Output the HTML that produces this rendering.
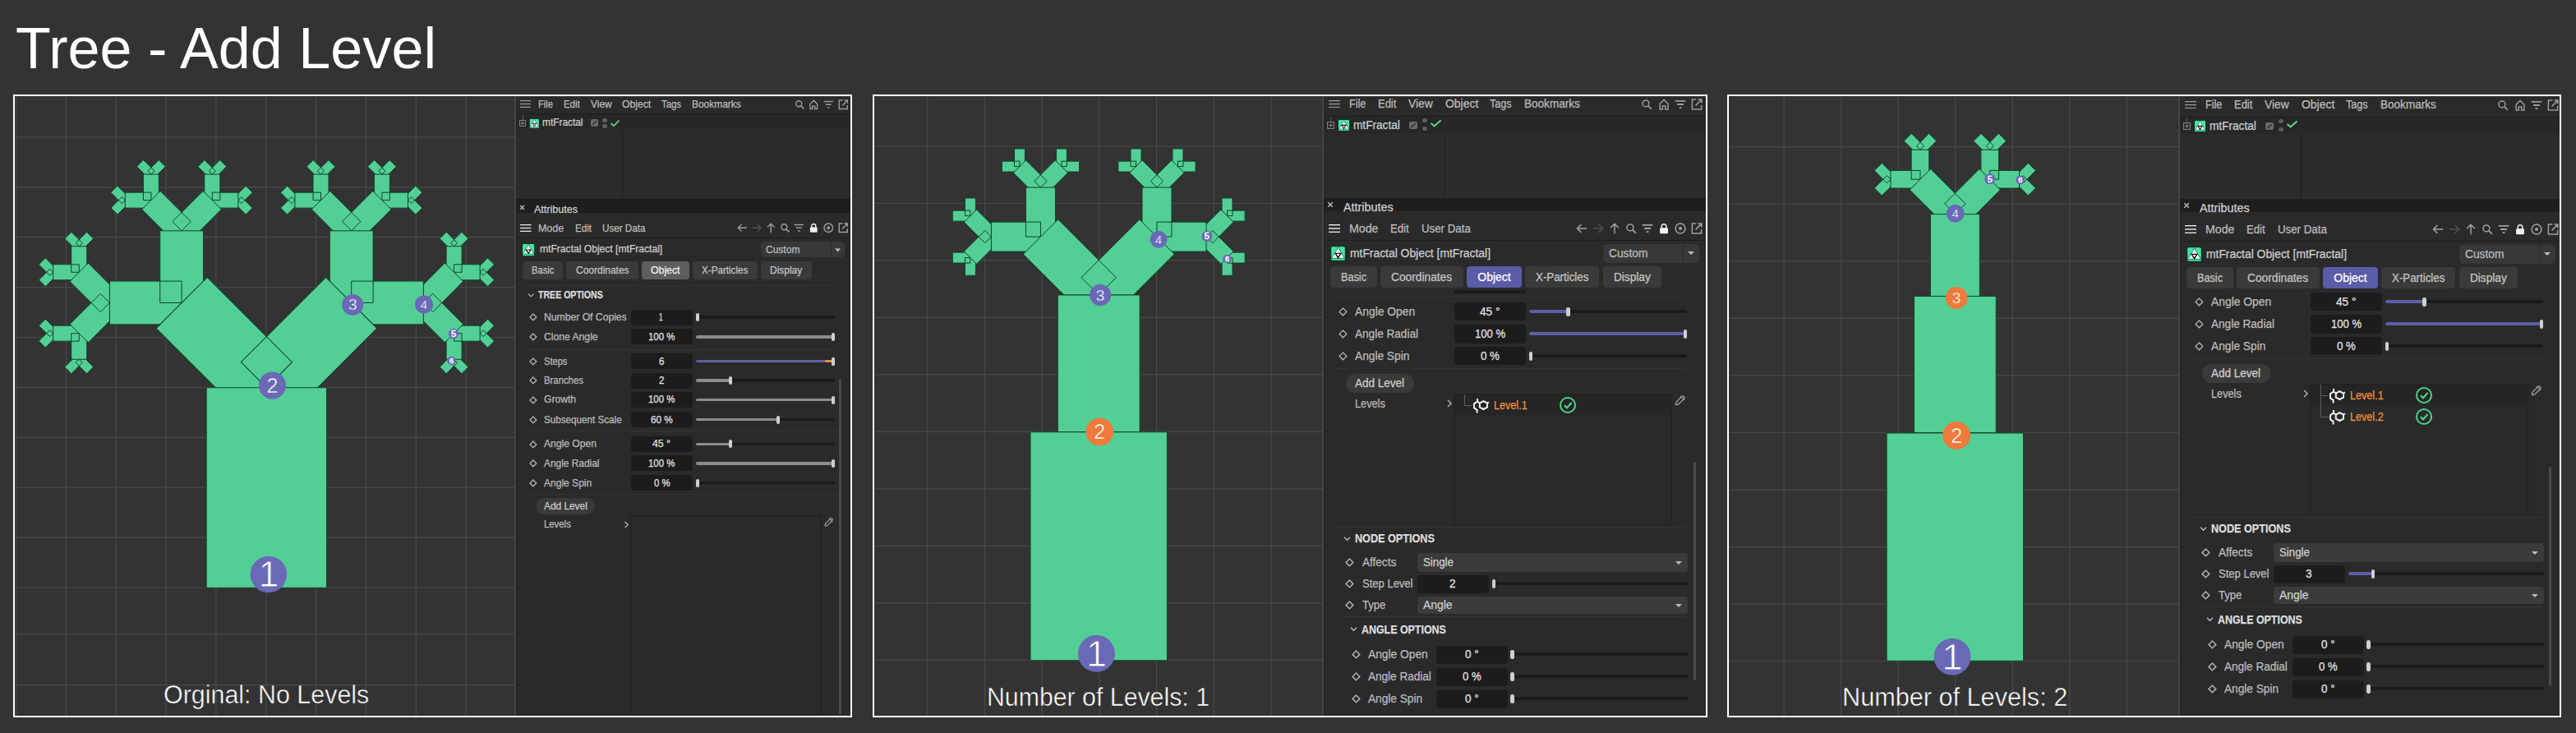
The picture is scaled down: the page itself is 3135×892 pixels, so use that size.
<!DOCTYPE html><html><head><meta charset="utf-8"><style>
html,body{margin:0;padding:0;}
body{width:3135px;height:892px;background:#333333;position:relative;overflow:hidden;font-family:"Liberation Sans",sans-serif;}
.t{position:absolute;white-space:nowrap;transform-origin:0 0;-webkit-text-stroke:0.25px currentColor;}
.r{position:absolute;}
svg{position:absolute;left:0;top:0;}
</style></head><body>
<div class="t" style="left:19.00px;top:23.38px;font-size:71px;line-height:71px;color:#ffffff;transform:scaleX(0.9878);-webkit-text-stroke:0;">Tree - Add Level</div>
<svg width="608.00" height="753.00" viewBox="18.50 117.50 608.00 753.00" style="left:18.50px;top:117.50px"><rect x="18.5" y="117.5" width="608.0" height="753.0" fill="#333333"/><path d="M19.00 117.5V870.5M79.85 117.5V870.5M140.70 117.5V870.5M201.55 117.5V870.5M262.40 117.5V870.5M323.25 117.5V870.5M384.10 117.5V870.5M444.95 117.5V870.5M505.80 117.5V870.5M566.65 117.5V870.5M18.5 166.40H626.5M18.5 227.30H626.5M18.5 288.20H626.5M18.5 349.10H626.5M18.5 410.00H626.5M18.5 470.90H626.5M18.5 531.80H626.5M18.5 592.70H626.5M18.5 653.60H626.5M18.5 714.50H626.5M18.5 771.10H626.5M18.5 833.10H626.5" stroke="#4a4a4a" stroke-width="1.2" fill="none"/><path d="M99.77 432.71 L91.71 440.77 L105.10 454.16 L113.16 446.10ZM99.77 440.77 L91.71 432.71 L78.32 446.10 L86.38 454.16ZM68.21 409.21 L60.16 401.16 L46.77 414.54 L54.82 422.60ZM60.16 409.21 L68.21 401.16 L54.82 387.77 L46.77 395.82ZM68.21 334.83 L60.16 326.77 L46.77 340.16 L54.82 348.22ZM60.16 334.83 L68.21 326.77 L54.82 313.38 L46.77 321.44ZM91.71 303.27 L99.77 295.22 L86.38 281.83 L78.32 289.88ZM91.71 295.22 L99.77 303.27 L113.16 289.88 L105.10 281.83ZM155.87 247.17 L147.82 239.11 L134.43 252.50 L142.48 260.56ZM147.82 247.17 L155.87 239.11 L142.48 225.72 L134.43 233.78ZM179.37 215.61 L187.43 207.56 L174.04 194.17 L165.98 202.22ZM179.37 207.56 L187.43 215.61 L200.82 202.22 L192.76 194.17ZM253.76 215.61 L261.81 207.56 L248.42 194.17 L240.37 202.22ZM253.76 207.56 L261.81 215.61 L275.20 202.22 L267.14 194.17ZM285.31 239.11 L293.37 247.17 L306.76 233.78 L298.70 225.72ZM293.37 239.11 L285.31 247.17 L298.70 260.56 L306.76 252.50ZM362.49 247.17 L354.43 239.11 L341.04 252.50 L349.10 260.56ZM354.43 247.17 L362.49 239.11 L349.10 225.72 L341.04 233.78ZM385.99 215.61 L394.04 207.56 L380.66 194.17 L372.60 202.22ZM385.99 207.56 L394.04 215.61 L407.43 202.22 L399.38 194.17ZM460.37 215.61 L468.43 207.56 L455.04 194.17 L446.98 202.22ZM460.37 207.56 L468.43 215.61 L481.82 202.22 L473.76 194.17ZM491.93 239.11 L499.98 247.17 L513.37 233.78 L505.32 225.72ZM499.98 239.11 L491.93 247.17 L505.32 260.56 L513.37 252.50ZM548.03 303.27 L556.09 295.22 L542.70 281.83 L534.64 289.88ZM548.03 295.22 L556.09 303.27 L569.48 289.88 L561.42 281.83ZM579.59 326.77 L587.64 334.83 L601.03 321.44 L592.98 313.38ZM587.64 326.77 L579.59 334.83 L592.98 348.22 L601.03 340.16ZM579.59 401.16 L587.64 409.21 L601.03 395.82 L592.98 387.77ZM587.64 401.16 L579.59 409.21 L592.98 422.60 L601.03 414.54ZM556.09 432.71 L548.03 440.77 L561.42 454.16 L569.48 446.10ZM556.09 440.77 L548.03 432.71 L534.64 446.10 L542.70 454.16Z" fill="#53cf96"/><path d="M99.77 432.71 L91.71 440.77 L105.10 454.16 L113.16 446.10ZM99.77 440.77 L91.71 432.71 L78.32 446.10 L86.38 454.16ZM68.21 409.21 L60.16 401.16 L46.77 414.54 L54.82 422.60ZM60.16 409.21 L68.21 401.16 L54.82 387.77 L46.77 395.82ZM68.21 334.83 L60.16 326.77 L46.77 340.16 L54.82 348.22ZM60.16 334.83 L68.21 326.77 L54.82 313.38 L46.77 321.44ZM91.71 303.27 L99.77 295.22 L86.38 281.83 L78.32 289.88ZM91.71 295.22 L99.77 303.27 L113.16 289.88 L105.10 281.83ZM155.87 247.17 L147.82 239.11 L134.43 252.50 L142.48 260.56ZM147.82 247.17 L155.87 239.11 L142.48 225.72 L134.43 233.78ZM179.37 215.61 L187.43 207.56 L174.04 194.17 L165.98 202.22ZM179.37 207.56 L187.43 215.61 L200.82 202.22 L192.76 194.17ZM253.76 215.61 L261.81 207.56 L248.42 194.17 L240.37 202.22ZM253.76 207.56 L261.81 215.61 L275.20 202.22 L267.14 194.17ZM285.31 239.11 L293.37 247.17 L306.76 233.78 L298.70 225.72ZM293.37 239.11 L285.31 247.17 L298.70 260.56 L306.76 252.50ZM362.49 247.17 L354.43 239.11 L341.04 252.50 L349.10 260.56ZM354.43 247.17 L362.49 239.11 L349.10 225.72 L341.04 233.78ZM385.99 215.61 L394.04 207.56 L380.66 194.17 L372.60 202.22ZM385.99 207.56 L394.04 215.61 L407.43 202.22 L399.38 194.17ZM460.37 215.61 L468.43 207.56 L455.04 194.17 L446.98 202.22ZM460.37 207.56 L468.43 215.61 L481.82 202.22 L473.76 194.17ZM491.93 239.11 L499.98 247.17 L513.37 233.78 L505.32 225.72ZM499.98 239.11 L491.93 247.17 L505.32 260.56 L513.37 252.50ZM548.03 303.27 L556.09 295.22 L542.70 281.83 L534.64 289.88ZM548.03 295.22 L556.09 303.27 L569.48 289.88 L561.42 281.83ZM579.59 326.77 L587.64 334.83 L601.03 321.44 L592.98 313.38ZM587.64 326.77 L579.59 334.83 L592.98 348.22 L601.03 340.16ZM579.59 401.16 L587.64 409.21 L601.03 395.82 L592.98 387.77ZM587.64 401.16 L579.59 409.21 L592.98 422.60 L601.03 414.54ZM556.09 432.71 L548.03 440.77 L561.42 454.16 L569.48 446.10ZM556.09 440.77 L548.03 432.71 L534.64 446.10 L542.70 454.16Z" fill="none" stroke="#0f4429" stroke-width="1.0" stroke-linejoin="miter"/><path d="M105.23 405.18 L86.25 405.18 L86.25 436.74 L105.23 436.74ZM95.74 414.68 L95.74 395.69 L64.18 395.69 L64.18 414.68ZM95.74 340.29 L95.74 321.31 L64.18 321.31 L64.18 340.29ZM86.25 330.80 L105.23 330.80 L105.23 299.24 L86.25 299.24ZM183.40 252.63 L183.40 233.65 L151.84 233.65 L151.84 252.63ZM173.91 243.14 L192.89 243.14 L192.89 211.58 L173.91 211.58ZM248.29 243.14 L267.28 243.14 L267.28 211.58 L248.29 211.58ZM257.78 233.65 L257.78 252.63 L289.34 252.63 L289.34 233.65ZM390.02 252.63 L390.02 233.65 L358.46 233.65 L358.46 252.63ZM380.52 243.14 L399.51 243.14 L399.51 211.58 L380.52 211.58ZM454.91 243.14 L473.89 243.14 L473.89 211.58 L454.91 211.58ZM464.40 233.65 L464.40 252.63 L495.96 252.63 L495.96 233.65ZM542.57 330.80 L561.55 330.80 L561.55 299.24 L542.57 299.24ZM552.06 321.31 L552.06 340.29 L583.62 340.29 L583.62 321.31ZM552.06 395.69 L552.06 414.68 L583.62 414.68 L583.62 395.69ZM561.55 405.18 L542.57 405.18 L542.57 436.74 L561.55 436.74Z" fill="#53cf96"/><path d="M105.23 405.18 L86.25 405.18 L86.25 436.74 L105.23 436.74ZM95.74 414.68 L95.74 395.69 L64.18 395.69 L64.18 414.68ZM95.74 340.29 L95.74 321.31 L64.18 321.31 L64.18 340.29ZM86.25 330.80 L105.23 330.80 L105.23 299.24 L86.25 299.24ZM183.40 252.63 L183.40 233.65 L151.84 233.65 L151.84 252.63ZM173.91 243.14 L192.89 243.14 L192.89 211.58 L173.91 211.58ZM248.29 243.14 L267.28 243.14 L267.28 211.58 L248.29 211.58ZM257.78 233.65 L257.78 252.63 L289.34 252.63 L289.34 233.65ZM390.02 252.63 L390.02 233.65 L358.46 233.65 L358.46 252.63ZM380.52 243.14 L399.51 243.14 L399.51 211.58 L380.52 211.58ZM454.91 243.14 L473.89 243.14 L473.89 211.58 L454.91 211.58ZM464.40 233.65 L464.40 252.63 L495.96 252.63 L495.96 233.65ZM542.57 330.80 L561.55 330.80 L561.55 299.24 L542.57 299.24ZM552.06 321.31 L552.06 340.29 L583.62 340.29 L583.62 321.31ZM552.06 395.69 L552.06 414.68 L583.62 414.68 L583.62 395.69ZM561.55 405.18 L542.57 405.18 L542.57 436.74 L561.55 436.74Z" fill="none" stroke="#0f4429" stroke-width="1.0" stroke-linejoin="miter"/><path d="M144.12 379.18 L121.74 356.80 L84.55 393.99 L106.93 416.37ZM121.74 379.18 L144.12 356.80 L106.93 319.61 L84.55 341.99ZM209.40 291.52 L231.78 269.14 L194.59 231.95 L172.21 254.33ZM209.40 269.14 L231.78 291.52 L268.97 254.33 L246.59 231.95ZM416.02 291.52 L438.40 269.14 L401.21 231.95 L378.83 254.33ZM416.02 269.14 L438.40 291.52 L475.59 254.33 L453.21 231.95ZM503.68 356.80 L526.06 379.18 L563.25 341.99 L540.87 319.61ZM526.06 356.80 L503.68 379.18 L540.87 416.37 L563.25 393.99Z" fill="#53cf96"/><path d="M144.12 379.18 L121.74 356.80 L84.55 393.99 L106.93 416.37ZM121.74 379.18 L144.12 356.80 L106.93 319.61 L84.55 341.99ZM209.40 291.52 L231.78 269.14 L194.59 231.95 L172.21 254.33ZM209.40 269.14 L231.78 291.52 L268.97 254.33 L246.59 231.95ZM416.02 291.52 L438.40 269.14 L401.21 231.95 L378.83 254.33ZM416.02 269.14 L438.40 291.52 L475.59 254.33 L453.21 231.95ZM503.68 356.80 L526.06 379.18 L563.25 341.99 L540.87 319.61ZM526.06 356.80 L503.68 379.18 L540.87 416.37 L563.25 393.99Z" fill="none" stroke="#0f4429" stroke-width="1.0" stroke-linejoin="miter"/><path d="M220.59 394.36 L220.59 341.62 L132.93 341.62 L132.93 394.36ZM194.22 367.99 L246.96 367.99 L246.96 280.33 L194.22 280.33ZM400.84 367.99 L453.58 367.99 L453.58 280.33 L400.84 280.33ZM427.21 341.62 L427.21 394.36 L514.87 394.36 L514.87 341.62Z" fill="#53cf96"/><path d="M220.59 394.36 L220.59 341.62 L132.93 341.62 L132.93 394.36ZM194.22 367.99 L246.96 367.99 L246.96 280.33 L194.22 280.33ZM400.84 367.99 L453.58 367.99 L453.58 280.33 L400.84 280.33ZM427.21 341.62 L427.21 394.36 L514.87 394.36 L514.87 341.62Z" fill="none" stroke="#0f4429" stroke-width="1.0" stroke-linejoin="miter"/><path d="M292.82 502.38 L354.98 440.22 L251.67 336.91 L189.51 399.07ZM292.82 440.22 L354.98 502.38 L458.29 399.07 L396.13 336.91Z" fill="#53cf96"/><path d="M292.82 502.38 L354.98 440.22 L251.67 336.91 L189.51 399.07ZM292.82 440.22 L354.98 502.38 L458.29 399.07 L396.13 336.91Z" fill="none" stroke="#0f4429" stroke-width="1.1" stroke-linejoin="miter"/><path d="M250.65 714.80 L397.15 714.80 L397.15 471.30 L250.65 471.30Z" fill="#53cf96"/><path d="M250.65 714.80 L397.15 714.80 L397.15 471.30 L250.65 471.30Z" fill="none" stroke="#0f4429" stroke-width="1.1" stroke-linejoin="miter"/><circle cx="326.4" cy="698.5" r="22.3" fill="#6a69b6"/><text x="326.4" y="713.68" font-size="44" fill="#ffffff" stroke="#6a69b6" stroke-width="0.79" text-anchor="middle" font-family="Liberation Sans">1</text><circle cx="331" cy="468.6" r="16.6" fill="#6a69b6"/><text x="331" y="477.23" font-size="25" fill="#ffffff" stroke="#6a69b6" stroke-width="0.45" text-anchor="middle" font-family="Liberation Sans">2</text><circle cx="428.7" cy="370.4" r="13" fill="#6a69b6"/><text x="428.7" y="376.95" font-size="19" fill="#ffffff" stroke="#6a69b6" stroke-width="0.34" text-anchor="middle" font-family="Liberation Sans">3</text><circle cx="515.5" cy="370" r="11" fill="#6a69b6"/><text x="515.5" y="375.18" font-size="15" fill="#ffffff" stroke="#6a69b6" stroke-width="0.27" text-anchor="middle" font-family="Liberation Sans">4</text><circle cx="551.5" cy="405.6" r="6.3" fill="#6a69b6"/><text x="551.5" y="409.40" font-size="11" fill="#ffffff" stroke="#ffffff" stroke-width="0.50" text-anchor="middle" font-family="Liberation Sans">5</text><circle cx="549" cy="438.4" r="5.2" fill="#6a69b6"/><text x="549" y="441.50" font-size="9" fill="#ffffff" stroke="#ffffff" stroke-width="0.50" text-anchor="middle" font-family="Liberation Sans">6</text></svg>
<svg width="545.00" height="753.00" viewBox="1064.50 117.50 545.00 753.00" style="left:1064.50px;top:117.50px"><rect x="1064.5" y="117.5" width="545.0" height="753.0" fill="#333333"/><path d="M1128.30 117.5V870.5M1198.00 117.5V870.5M1267.70 117.5V870.5M1337.40 117.5V870.5M1407.10 117.5V870.5M1476.80 117.5V870.5M1546.50 117.5V870.5M1064.5 177.50H1609.5M1064.5 246.98H1609.5M1064.5 316.46H1609.5M1064.5 385.94H1609.5M1064.5 455.42H1609.5M1064.5 524.90H1609.5M1064.5 594.38H1609.5M1064.5 663.86H1609.5M1064.5 733.34H1609.5M1064.5 802.82H1609.5" stroke="#4a4a4a" stroke-width="1.2" fill="none"/><path d="M1186.88 313.11 L1173.94 313.11 L1173.94 334.73 L1186.88 334.73ZM1180.41 319.58 L1180.41 306.64 L1158.79 306.64 L1158.79 319.58ZM1180.41 268.63 L1180.41 255.68 L1158.79 255.68 L1158.79 268.63ZM1173.94 262.16 L1186.88 262.16 L1186.88 240.54 L1173.94 240.54ZM1240.46 208.58 L1240.46 195.64 L1218.84 195.64 L1218.84 208.58ZM1233.98 202.11 L1246.93 202.11 L1246.93 180.49 L1233.98 180.49ZM1284.94 202.11 L1297.88 202.11 L1297.88 180.49 L1284.94 180.49ZM1291.41 195.64 L1291.41 208.58 L1313.03 208.58 L1313.03 195.64ZM1381.99 208.58 L1381.99 195.64 L1360.37 195.64 L1360.37 208.58ZM1375.52 202.11 L1388.46 202.11 L1388.46 180.49 L1375.52 180.49ZM1426.47 202.11 L1439.42 202.11 L1439.42 180.49 L1426.47 180.49ZM1432.94 195.64 L1432.94 208.58 L1454.56 208.58 L1454.56 195.64ZM1486.52 262.16 L1499.46 262.16 L1499.46 240.54 L1486.52 240.54ZM1492.99 255.68 L1492.99 268.63 L1514.61 268.63 L1514.61 255.68ZM1492.99 306.64 L1492.99 319.58 L1514.61 319.58 L1514.61 306.64ZM1499.46 313.11 L1486.52 313.11 L1486.52 334.73 L1499.46 334.73Z" fill="#53cf96"/><path d="M1186.88 313.11 L1173.94 313.11 L1173.94 334.73 L1186.88 334.73ZM1180.41 319.58 L1180.41 306.64 L1158.79 306.64 L1158.79 319.58ZM1180.41 268.63 L1180.41 255.68 L1158.79 255.68 L1158.79 268.63ZM1173.94 262.16 L1186.88 262.16 L1186.88 240.54 L1173.94 240.54ZM1240.46 208.58 L1240.46 195.64 L1218.84 195.64 L1218.84 208.58ZM1233.98 202.11 L1246.93 202.11 L1246.93 180.49 L1233.98 180.49ZM1284.94 202.11 L1297.88 202.11 L1297.88 180.49 L1284.94 180.49ZM1291.41 195.64 L1291.41 208.58 L1313.03 208.58 L1313.03 195.64ZM1381.99 208.58 L1381.99 195.64 L1360.37 195.64 L1360.37 208.58ZM1375.52 202.11 L1388.46 202.11 L1388.46 180.49 L1375.52 180.49ZM1426.47 202.11 L1439.42 202.11 L1439.42 180.49 L1426.47 180.49ZM1432.94 195.64 L1432.94 208.58 L1454.56 208.58 L1454.56 195.64ZM1486.52 262.16 L1499.46 262.16 L1499.46 240.54 L1486.52 240.54ZM1492.99 255.68 L1492.99 268.63 L1514.61 268.63 L1514.61 255.68ZM1492.99 306.64 L1492.99 319.58 L1514.61 319.58 L1514.61 306.64ZM1499.46 313.11 L1486.52 313.11 L1486.52 334.73 L1499.46 334.73Z" fill="none" stroke="#0f4429" stroke-width="1.0" stroke-linejoin="miter"/><path d="M1213.51 295.26 L1198.26 280.00 L1172.78 305.48 L1188.04 320.74ZM1198.26 295.26 L1213.51 280.00 L1188.04 254.53 L1172.78 269.79ZM1258.30 235.21 L1273.56 219.96 L1248.09 194.48 L1232.83 209.74ZM1258.30 219.96 L1273.56 235.21 L1299.04 209.74 L1283.78 194.48ZM1399.84 235.21 L1415.10 219.96 L1389.62 194.48 L1374.36 209.74ZM1399.84 219.96 L1415.10 235.21 L1440.57 209.74 L1425.31 194.48ZM1459.89 280.00 L1475.14 295.26 L1500.62 269.79 L1485.36 254.53ZM1475.14 280.00 L1459.89 295.26 L1485.36 320.74 L1500.62 305.48Z" fill="#53cf96"/><path d="M1213.51 295.26 L1198.26 280.00 L1172.78 305.48 L1188.04 320.74ZM1198.26 295.26 L1213.51 280.00 L1188.04 254.53 L1172.78 269.79ZM1258.30 235.21 L1273.56 219.96 L1248.09 194.48 L1232.83 209.74ZM1258.30 219.96 L1273.56 235.21 L1299.04 209.74 L1283.78 194.48ZM1399.84 235.21 L1415.10 219.96 L1389.62 194.48 L1374.36 209.74ZM1399.84 219.96 L1415.10 235.21 L1440.57 209.74 L1425.31 194.48ZM1459.89 280.00 L1475.14 295.26 L1500.62 269.79 L1485.36 254.53ZM1475.14 280.00 L1459.89 295.26 L1485.36 320.74 L1500.62 305.48Z" fill="none" stroke="#0f4429" stroke-width="1.0" stroke-linejoin="miter"/><path d="M1265.93 305.61 L1265.93 269.65 L1205.88 269.65 L1205.88 305.61ZM1247.95 287.63 L1283.91 287.63 L1283.91 227.58 L1247.95 227.58ZM1389.49 287.63 L1425.45 287.63 L1425.45 227.58 L1389.49 227.58ZM1407.47 269.65 L1407.47 305.61 L1467.52 305.61 L1467.52 269.65Z" fill="#53cf96"/><path d="M1265.93 305.61 L1265.93 269.65 L1205.88 269.65 L1205.88 305.61ZM1247.95 287.63 L1283.91 287.63 L1283.91 227.58 L1247.95 227.58ZM1389.49 287.63 L1425.45 287.63 L1425.45 227.58 L1389.49 227.58ZM1407.47 269.65 L1407.47 305.61 L1467.52 305.61 L1467.52 269.65Z" fill="none" stroke="#0f4429" stroke-width="1.0" stroke-linejoin="miter"/><path d="M1315.51 379.59 L1357.89 337.21 L1287.12 266.44 L1244.74 308.82ZM1315.51 337.21 L1357.89 379.59 L1428.66 308.82 L1386.28 266.44Z" fill="#53cf96"/><path d="M1315.51 379.59 L1357.89 337.21 L1287.12 266.44 L1244.74 308.82ZM1315.51 337.21 L1357.89 379.59 L1428.66 308.82 L1386.28 266.44Z" fill="none" stroke="#0f4429" stroke-width="1.0" stroke-linejoin="miter"/><path d="M1286.75 525.20 L1386.65 525.20 L1386.65 358.40 L1286.75 358.40Z" fill="#53cf96"/><path d="M1286.75 525.20 L1386.65 525.20 L1386.65 358.40 L1286.75 358.40Z" fill="none" stroke="#0f4429" stroke-width="1.1" stroke-linejoin="miter"/><path d="M1253.45 803.20 L1419.95 803.20 L1419.95 525.20 L1253.45 525.20Z" fill="#53cf96"/><path d="M1253.45 803.20 L1419.95 803.20 L1419.95 525.20 L1253.45 525.20Z" fill="none" stroke="#0f4429" stroke-width="1.1" stroke-linejoin="miter"/><circle cx="1333.9" cy="794.8" r="22.5" fill="#6a69b6"/><text x="1333.9" y="810.32" font-size="45" fill="#ffffff" stroke="#6a69b6" stroke-width="0.81" text-anchor="middle" font-family="Liberation Sans">1</text><circle cx="1337.8" cy="525" r="16.9" fill="#ef7a3c"/><text x="1337.8" y="533.62" font-size="25" fill="#ffffff" stroke="#ef7a3c" stroke-width="0.45" text-anchor="middle" font-family="Liberation Sans">2</text><circle cx="1338.6" cy="358.6" r="13.1" fill="#6a69b6"/><text x="1338.6" y="365.16" font-size="19" fill="#ffffff" stroke="#6a69b6" stroke-width="0.34" text-anchor="middle" font-family="Liberation Sans">3</text><circle cx="1409.5" cy="290.9" r="10.4" fill="#6a69b6"/><text x="1409.5" y="296.07" font-size="15" fill="#ffffff" stroke="#6a69b6" stroke-width="0.27" text-anchor="middle" font-family="Liberation Sans">4</text><circle cx="1468.4" cy="287.1" r="6.5" fill="#6a69b6"/><text x="1468.4" y="290.90" font-size="11" fill="#ffffff" stroke="#ffffff" stroke-width="0.50" text-anchor="middle" font-family="Liberation Sans">5</text><circle cx="1493" cy="314.4" r="5.2" fill="#6a69b6"/><text x="1493" y="317.50" font-size="9" fill="#ffffff" stroke="#ffffff" stroke-width="0.50" text-anchor="middle" font-family="Liberation Sans">6</text></svg>
<svg width="546.50" height="753.00" viewBox="2104.50 117.50 546.50 753.00" style="left:2104.50px;top:117.50px"><rect x="2104.5" y="117.5" width="546.5" height="753.0" fill="#333333"/><path d="M2170.65 117.5V870.5M2240.20 117.5V870.5M2309.75 117.5V870.5M2379.30 117.5V870.5M2448.85 117.5V870.5M2518.40 117.5V870.5M2587.95 117.5V870.5M2104.5 178.20H2651.0M2104.5 247.76H2651.0M2104.5 317.32H2651.0M2104.5 386.88H2651.0M2104.5 456.44H2651.0M2104.5 526.00H2651.0M2104.5 595.56H2651.0M2104.5 665.12H2651.0M2104.5 734.68H2651.0M2104.5 804.24H2651.0" stroke="#4a4a4a" stroke-width="1.2" fill="none"/><path d="M2305.06 222.30 L2295.90 213.15 L2280.65 228.40 L2289.80 237.56ZM2295.90 222.30 L2305.06 213.15 L2289.80 197.90 L2280.65 207.05ZM2331.85 186.35 L2341.01 177.20 L2325.76 161.95 L2316.60 171.10ZM2331.85 177.20 L2341.01 186.35 L2356.26 171.10 L2347.11 161.95ZM2416.59 186.35 L2425.75 177.20 L2410.49 161.95 L2401.34 171.10ZM2416.59 177.20 L2425.75 186.35 L2441.00 171.10 L2431.84 161.95ZM2452.54 213.15 L2461.70 222.30 L2476.95 207.05 L2467.80 197.90ZM2461.70 213.15 L2452.54 222.30 L2467.80 237.56 L2476.95 228.40Z" fill="#53cf96"/><path d="M2305.06 222.30 L2295.90 213.15 L2280.65 228.40 L2289.80 237.56ZM2295.90 222.30 L2305.06 213.15 L2289.80 197.90 L2280.65 207.05ZM2331.85 186.35 L2341.01 177.20 L2325.76 161.95 L2316.60 171.10ZM2331.85 177.20 L2341.01 186.35 L2356.26 171.10 L2347.11 161.95ZM2416.59 186.35 L2425.75 177.20 L2410.49 161.95 L2401.34 171.10ZM2416.59 177.20 L2425.75 186.35 L2441.00 171.10 L2431.84 161.95ZM2452.54 213.15 L2461.70 222.30 L2476.95 207.05 L2467.80 197.90ZM2461.70 213.15 L2452.54 222.30 L2467.80 237.56 L2476.95 228.40Z" fill="none" stroke="#0f4429" stroke-width="1.0" stroke-linejoin="miter"/><path d="M2336.43 228.52 L2336.43 206.94 L2300.48 206.94 L2300.48 228.52ZM2325.64 217.73 L2347.22 217.73 L2347.22 181.78 L2325.64 181.78ZM2410.38 217.73 L2431.96 217.73 L2431.96 181.78 L2410.38 181.78ZM2421.17 206.94 L2421.17 228.52 L2457.12 228.52 L2457.12 206.94Z" fill="#53cf96"/><path d="M2336.43 228.52 L2336.43 206.94 L2300.48 206.94 L2300.48 228.52ZM2325.64 217.73 L2347.22 217.73 L2347.22 181.78 L2325.64 181.78ZM2410.38 217.73 L2431.96 217.73 L2431.96 181.78 L2410.38 181.78ZM2421.17 206.94 L2421.17 228.52 L2457.12 228.52 L2457.12 206.94Z" fill="none" stroke="#0f4429" stroke-width="1.0" stroke-linejoin="miter"/><path d="M2366.08 272.81 L2391.52 247.38 L2349.15 205.01 L2323.72 230.44ZM2366.08 247.38 L2391.52 272.81 L2433.88 230.44 L2408.45 205.01Z" fill="#53cf96"/><path d="M2366.08 272.81 L2391.52 247.38 L2349.15 205.01 L2323.72 230.44ZM2366.08 247.38 L2391.52 272.81 L2433.88 230.44 L2408.45 205.01Z" fill="none" stroke="#0f4429" stroke-width="1.0" stroke-linejoin="miter"/><path d="M2348.83 359.96 L2408.77 359.96 L2408.77 260.10 L2348.83 260.10Z" fill="#53cf96"/><path d="M2348.83 359.96 L2408.77 359.96 L2408.77 260.10 L2348.83 260.10Z" fill="none" stroke="#0f4429" stroke-width="1.0" stroke-linejoin="miter"/><path d="M2328.85 526.40 L2428.75 526.40 L2428.75 359.96 L2328.85 359.96Z" fill="#53cf96"/><path d="M2328.85 526.40 L2428.75 526.40 L2428.75 359.96 L2328.85 359.96Z" fill="none" stroke="#0f4429" stroke-width="1.1" stroke-linejoin="miter"/><path d="M2295.55 803.80 L2462.05 803.80 L2462.05 526.40 L2295.55 526.40Z" fill="#53cf96"/><path d="M2295.55 803.80 L2462.05 803.80 L2462.05 526.40 L2295.55 526.40Z" fill="none" stroke="#0f4429" stroke-width="1.1" stroke-linejoin="miter"/><circle cx="2375.5" cy="798.7" r="22.5" fill="#6a69b6"/><text x="2375.5" y="814.23" font-size="45" fill="#ffffff" stroke="#6a69b6" stroke-width="0.81" text-anchor="middle" font-family="Liberation Sans">1</text><circle cx="2380.6" cy="529.5" r="16.9" fill="#ef7a3c"/><text x="2380.6" y="538.12" font-size="25" fill="#ffffff" stroke="#ef7a3c" stroke-width="0.45" text-anchor="middle" font-family="Liberation Sans">2</text><circle cx="2380.5" cy="361.9" r="13.4" fill="#ef7a3c"/><text x="2380.5" y="368.45" font-size="19" fill="#ffffff" stroke="#ef7a3c" stroke-width="0.34" text-anchor="middle" font-family="Liberation Sans">3</text><circle cx="2379.1" cy="259.3" r="10.9" fill="#6a69b6"/><text x="2379.1" y="264.48" font-size="15" fill="#ffffff" stroke="#6a69b6" stroke-width="0.27" text-anchor="middle" font-family="Liberation Sans">4</text><circle cx="2421.2" cy="217.3" r="6.5" fill="#6a69b6"/><text x="2421.2" y="221.09" font-size="11" fill="#ffffff" stroke="#ffffff" stroke-width="0.50" text-anchor="middle" font-family="Liberation Sans">5</text><circle cx="2458.2" cy="218.4" r="5.5" fill="#6a69b6"/><text x="2458.2" y="221.50" font-size="9" fill="#ffffff" stroke="#ffffff" stroke-width="0.50" text-anchor="middle" font-family="Liberation Sans">6</text></svg>
<div class="t" style="left:199.00px;top:830.05px;font-size:31px;line-height:31px;color:#ffffff;transform:scaleX(0.9815);-webkit-text-stroke:0.5px #333333;">Orginal: No Levels</div>
<div class="t" style="left:1200.60px;top:833.15px;font-size:31px;line-height:31px;color:#ffffff;transform:scaleX(0.9769);-webkit-text-stroke:0.5px #333333;">Number of Levels: 1</div>
<div class="t" style="left:2241.80px;top:833.15px;font-size:31px;line-height:31px;color:#ffffff;transform:scaleX(0.9884);-webkit-text-stroke:0.5px #333333;">Number of Levels: 2</div>
<div class="r" style="left:1610.50px;top:117.50px;width:465.00px;height:753.00px;background:#2a2a2a;"></div>
<div class="r" style="left:1609.00px;top:117.50px;width:1.50px;height:753.00px;background:#454545;"></div>
<div class="r" style="left:1610.50px;top:117.50px;width:1.00px;height:753.00px;background:#1f1f1f;"></div>
<div class="r" style="left:1610.50px;top:117.50px;width:465.00px;height:23.00px;background:#2a2a2a;"></div>
<div class="r" style="left:1610.50px;top:140.50px;width:465.00px;height:1.00px;background:#1c1c1c;"></div>
<div class="r" style="left:1610.50px;top:141.50px;width:465.00px;height:97.00px;background:#2b2b2b;"></div>
<div class="r" style="left:1610.50px;top:141.50px;width:465.00px;height:20.00px;background:#272727;"></div>
<div class="r" style="left:1758.00px;top:161.50px;width:1.00px;height:77.00px;background:#1d1d1d;"></div>
<div class="r" style="left:1610.50px;top:238.50px;width:465.00px;height:0.50px;background:#1e1e1e;"></div>
<div class="r" style="left:1610.50px;top:239.00px;width:465.00px;height:1.00px;background:#303030;"></div>
<div class="r" style="left:1610.50px;top:241.00px;width:465.00px;height:15.60px;background:#1e1e1e;"></div>
<svg width="14.1" height="9.2" viewBox="0 0 14.1 9.2" style="left:1616.80px;top:121.80px;"><rect x="0" y="0.00" width="14.1" height="1.29" fill="#9a9a9a"/><rect x="0" y="3.96" width="14.1" height="1.29" fill="#9a9a9a"/><rect x="0" y="7.91" width="14.1" height="1.29" fill="#9a9a9a"/></svg>
<div class="t" style="left:1641.50px;top:119.15px;font-size:14px;line-height:14px;color:#bdbdbd;transform:scaleX(0.9043);">File</div>
<div class="t" style="left:1676.80px;top:119.15px;font-size:14px;line-height:14px;color:#bdbdbd;transform:scaleX(0.9244);">Edit</div>
<div class="t" style="left:1713.90px;top:119.15px;font-size:14px;line-height:14px;color:#bdbdbd;transform:scaleX(0.9836);">View</div>
<div class="t" style="left:1758.50px;top:119.15px;font-size:14px;line-height:14px;color:#bdbdbd;transform:scaleX(0.9960);">Object</div>
<div class="t" style="left:1813.40px;top:119.15px;font-size:14px;line-height:14px;color:#bdbdbd;transform:scaleX(0.8995);">Tags</div>
<div class="t" style="left:1855.40px;top:119.15px;font-size:14px;line-height:14px;color:#bdbdbd;transform:scaleX(0.9683);">Bookmarks</div>
<svg width="14" height="14" viewBox="0 0 14 14" style="left:1997.00px;top:119.60px;"><circle cx="5.88" cy="5.88" r="3.92" fill="none" stroke="#9a9a9a" stroke-width="1.5"/><path d="M8.68 8.68L12.88 12.88" stroke="#9a9a9a" stroke-width="1.7999999999999998"/></svg>
<svg width="14" height="14" viewBox="0 0 14 14" style="left:2017.50px;top:119.60px;"><path d="M2.10 6.30L7.00 1.40L11.90 6.30V12.88H8.68V9.10H5.32V12.88H2.10Z" fill="none" stroke="#9a9a9a" stroke-width="1.5"/></svg>
<svg width="14" height="14" viewBox="0 0 14 14" style="left:2038.00px;top:119.60px;"><path d="M0.70 2.80H13.30M3.08 7.00H10.92M5.60 11.20H8.40" stroke="#9a9a9a" stroke-width="1.7999999999999998"/></svg>
<svg width="14" height="14" viewBox="0 0 14 14" style="left:2057.60px;top:119.60px;"><path d="M6.30 1.12H1.40V12.88H12.60V7.70M5.60 8.40L12.88 1.12M8.40 1.12H12.88V5.60" fill="none" stroke="#9a9a9a" stroke-width="1.5"/></svg>
<div class="r" style="left:1619.00px;top:141.50px;width:1.00px;height:7.00px;background:#5a5a5a;"></div>
<svg width="9" height="9" viewBox="0 0 9 9" style="left:1614.80px;top:147.90px;"><rect x="0.6" y="0.6" width="7.80" height="7.80" fill="none" stroke="#8a8a8a" stroke-width="1"/><path d="M2.25 4.5H6.75M4.5 2.25V6.75" stroke="#8a8a8a" stroke-width="1"/></svg>
<svg width="15" height="15" viewBox="0 0 15 15" style="left:1628.00px;top:145.10px;"><rect x="0.47" y="0.47" width="14.05" height="14.05" rx="1.74" fill="#44e6a4" stroke="#0d3324" stroke-width="0.95"/><path d="M7.50 1.50L13.74 12.08L1.26 12.08Z" fill="#ffffff" stroke="#137048" stroke-width="0.71"/><path d="M4.89 7.42L10.11 7.42L7.50 11.53Z" fill="#ffffff" stroke="#111111" stroke-width="1.11"/></svg>
<div class="t" style="left:1647.40px;top:144.85px;font-size:14px;line-height:14px;color:#cfcfcf;transform:scaleX(0.9736);">mtFractal</div>
<div class="r" style="left:1715.30px;top:148.00px;width:9.70px;height:9.00px;background:#6a6a6a;border-radius:2px;"></div>
<svg width="10" height="9" viewBox="0 0 10 9" style="left:1715.30px;top:148.00px;"><path d="M2.5 7L7.5 2" stroke="#2a2a2a" stroke-width="1.4"/></svg>
<div class="r" style="left:1731.40px;top:143.50px;width:5.80px;height:5.80px;background:#5e5e5e;border-radius:3px;"></div>
<div class="r" style="left:1731.40px;top:153.70px;width:5.80px;height:5.80px;background:#5e5e5e;border-radius:3px;"></div>
<svg width="15" height="10" viewBox="0 0 15 10" style="left:1740.00px;top:145.00px;"><path d="M1.5 5L5.5 8.5L13.5 1.5" fill="none" stroke="#5fd58a" stroke-width="2"/></svg>
<svg width="8" height="8" viewBox="0 0 8 8" style="left:1615.00px;top:245.10px;"><path d="M1.20 1.20L6.80 6.80M6.80 1.20L1.20 6.80" stroke="#bdbdbd" stroke-width="1.4"/></svg>
<div class="t" style="left:1635.40px;top:245.15px;font-size:14px;line-height:14px;color:#d2d2d2;transform:scaleX(1.0247);">Attributes</div>
<svg width="14.6" height="10.1" viewBox="0 0 14.6 10.1" style="left:1616.70px;top:273.10px;"><rect x="0" y="0.00" width="14.6" height="1.41" fill="#ececec"/><rect x="0" y="4.34" width="14.6" height="1.41" fill="#ececec"/><rect x="0" y="8.69" width="14.6" height="1.41" fill="#ececec"/></svg>
<div class="t" style="left:1641.60px;top:271.35px;font-size:14px;line-height:14px;color:#bdbdbd;transform:scaleX(1.0108);">Mode</div>
<div class="t" style="left:1692.40px;top:271.35px;font-size:14px;line-height:14px;color:#bdbdbd;transform:scaleX(0.9368);">Edit</div>
<div class="t" style="left:1730.20px;top:271.35px;font-size:14px;line-height:14px;color:#bdbdbd;transform:scaleX(0.9489);">User Data</div>
<svg width="14" height="14" viewBox="0 0 14 14" style="left:1918.00px;top:271.00px;"><path d="M13.30 7.0H1.40M6.30 2.10L1.40 7.0L6.30 11.90" fill="none" stroke="#a0a0a0" stroke-width="1.5"/></svg>
<svg width="14" height="14" viewBox="0 0 14 14" style="left:1938.00px;top:271.00px;"><path d="M0.70 7.0H12.60M7.70 2.10L12.60 7.0L7.70 11.90" fill="none" stroke="#505050" stroke-width="1.5"/></svg>
<svg width="14" height="14" viewBox="0 0 14 14" style="left:1958.00px;top:271.00px;"><path d="M7.0 13.30V1.40M2.10 6.30L7.0 1.40L11.90 6.30" fill="none" stroke="#a0a0a0" stroke-width="1.5"/></svg>
<svg width="14" height="14" viewBox="0 0 14 14" style="left:1977.50px;top:271.00px;"><circle cx="5.88" cy="5.88" r="3.92" fill="none" stroke="#a0a0a0" stroke-width="1.5"/><path d="M8.68 8.68L12.88 12.88" stroke="#a0a0a0" stroke-width="1.7999999999999998"/></svg>
<svg width="14" height="14" viewBox="0 0 14 14" style="left:1998.00px;top:271.00px;"><path d="M0.70 2.80H13.30M3.08 7.00H10.92M5.60 11.20H8.40" stroke="#a0a0a0" stroke-width="1.7999999999999998"/></svg>
<svg width="14" height="14" viewBox="0 0 14 14" style="left:2017.70px;top:271.00px;"><rect x="2.10" y="6.30" width="9.80" height="7.00" rx="1" fill="#f0f0f0"/><path d="M4.20 6.72V4.48A2.80 2.80 0 0 1 9.80 4.48V6.72" fill="none" stroke="#f0f0f0" stroke-width="1.5"/></svg>
<svg width="14" height="14" viewBox="0 0 14 14" style="left:2038.00px;top:271.00px;"><circle cx="7.0" cy="7.0" r="5.88" fill="none" stroke="#a0a0a0" stroke-width="1.5"/><circle cx="7.0" cy="7.0" r="2.10" fill="#a0a0a0"/></svg>
<svg width="14" height="14" viewBox="0 0 14 14" style="left:2057.60px;top:271.00px;"><path d="M6.30 1.12H1.40V12.88H12.60V7.70M5.60 8.40L12.88 1.12M8.40 1.12H12.88V5.60" fill="none" stroke="#a0a0a0" stroke-width="1.5"/></svg>
<div class="r" style="left:1610.50px;top:291.50px;width:465.00px;height:1.00px;background:#1f1f1f;"></div>
<svg width="19" height="19" viewBox="0 0 19 19" style="left:1618.60px;top:298.60px;"><rect x="0.60" y="0.60" width="17.80" height="17.80" rx="2.20" fill="#44e6a4" stroke="#0d3324" stroke-width="1.20"/><path d="M9.50 1.90L17.40 15.30L1.60 15.30Z" fill="#ffffff" stroke="#137048" stroke-width="0.90"/><path d="M6.20 9.40L12.80 9.40L9.50 14.60Z" fill="#ffffff" stroke="#111111" stroke-width="1.40"/></svg>
<div class="t" style="left:1643.30px;top:301.45px;font-size:14px;line-height:14px;color:#cfcfcf;transform:scaleX(0.9902);">mtFractal Object [mtFractal]</div>
<div class="r" style="left:1951.00px;top:297.00px;width:116.80px;height:22.60px;background:#383838;border-radius:5px;"></div>
<div class="r" style="left:2048.30px;top:297.00px;width:1.00px;height:22.60px;background:#2a2a2a;"></div>
<div class="t" style="left:1957.80px;top:301.45px;font-size:14px;line-height:14px;color:#bdbdbd;transform:scaleX(0.9827);">Custom</div>
<svg width="10" height="6" viewBox="0 0 10 6" style="left:2053.00px;top:305.00px;"><path d="M1 1H9L5 5Z" fill="#bbbbbb"/></svg>
<div class="r" style="left:1618.90px;top:324.00px;width:57.10px;height:25.70px;background:#3a3a3a;border-radius:4px;"></div>
<div class="t" style="left:1632.20px;top:330.15px;font-size:14px;line-height:14px;color:#c6c6c6;transform:scaleX(0.9055);">Basic</div>
<div class="r" style="left:1680.00px;top:324.00px;width:100.60px;height:25.70px;background:#3a3a3a;border-radius:4px;"></div>
<div class="t" style="left:1693.30px;top:330.15px;font-size:14px;line-height:14px;color:#c6c6c6;transform:scaleX(0.9816);">Coordinates</div>
<div class="r" style="left:1785.00px;top:324.00px;width:67.00px;height:25.70px;background:#5b5ba6;border-radius:4px;"></div>
<div class="t" style="left:1798.30px;top:330.15px;font-size:14px;line-height:14px;color:#ffffff;">Object</div>
<div class="r" style="left:1856.20px;top:324.00px;width:90.20px;height:25.70px;background:#3a3a3a;border-radius:4px;"></div>
<div class="t" style="left:1868.90px;top:330.15px;font-size:14px;line-height:14px;color:#c6c6c6;transform:scaleX(0.9515);">X-Particles</div>
<div class="r" style="left:1951.00px;top:324.00px;width:70.50px;height:25.70px;background:#3a3a3a;border-radius:4px;"></div>
<div class="t" style="left:1963.80px;top:330.15px;font-size:14px;line-height:14px;color:#c6c6c6;transform:scaleX(0.9738);">Display</div>
<div class="r" style="left:1770.00px;top:353.20px;width:86.80px;height:4.30px;background:#1c1c1c;"></div>
<div class="r" style="left:1624.00px;top:359.80px;width:428.00px;height:1.00px;background:#333333;"></div>
<svg width="12.8" height="12.8" viewBox="0 0 12.8 12.8" style="left:1627.80px;top:372.70px;"><path d="M6.4 2.0L10.8 6.4L6.4 10.8L2.0 6.4Z" fill="none" stroke="#bdbdbd" stroke-width="1.2"/></svg>
<div class="t" style="left:1649.20px;top:372.05px;font-size:14px;line-height:14px;color:#bdbdbd;transform:scaleX(0.9886);">Angle Open</div>
<div class="r" style="left:1770.00px;top:368.10px;width:86.80px;height:22.30px;background:#1c1c1c;border-radius:4px;"></div>
<div class="t" style="left:1801.00px;top:372.05px;font-size:14px;line-height:14px;color:#e4e4e4;transform:scaleX(0.9736);">45 °</div>
<div class="r" style="left:1860.80px;top:377.10px;width:191.90px;height:4.00px;background:#1b1b1b;border-radius:2.0px;"></div>
<div class="r" style="left:1860.80px;top:377.10px;width:47.60px;height:4.00px;background:#5e5ea6;border-radius:2.0px;"></div>
<div class="r" style="left:1906.15px;top:373.60px;width:4.50px;height:11.00px;background:#cfcfcf;border-radius:2.25px;"></div>
<svg width="12.8" height="12.8" viewBox="0 0 12.8 12.8" style="left:1627.80px;top:400.00px;"><path d="M6.4 2.0L10.8 6.4L6.4 10.8L2.0 6.4Z" fill="none" stroke="#bdbdbd" stroke-width="1.2"/></svg>
<div class="t" style="left:1649.20px;top:399.35px;font-size:14px;line-height:14px;color:#bdbdbd;transform:scaleX(0.9699);">Angle Radial</div>
<div class="r" style="left:1770.00px;top:395.40px;width:86.80px;height:22.30px;background:#1c1c1c;border-radius:4px;"></div>
<div class="t" style="left:1794.90px;top:399.35px;font-size:14px;line-height:14px;color:#e4e4e4;transform:scaleX(0.9321);">100 %</div>
<div class="r" style="left:1860.80px;top:404.40px;width:191.90px;height:4.00px;background:#1b1b1b;border-radius:2.0px;"></div>
<div class="r" style="left:1860.80px;top:404.40px;width:190.20px;height:4.00px;background:#5e5ea6;border-radius:2.0px;"></div>
<div class="r" style="left:2048.75px;top:400.90px;width:4.50px;height:11.00px;background:#cfcfcf;border-radius:2.25px;"></div>
<svg width="12.8" height="12.8" viewBox="0 0 12.8 12.8" style="left:1627.80px;top:426.70px;"><path d="M6.4 2.0L10.8 6.4L6.4 10.8L2.0 6.4Z" fill="none" stroke="#bdbdbd" stroke-width="1.2"/></svg>
<div class="t" style="left:1649.20px;top:426.05px;font-size:14px;line-height:14px;color:#bdbdbd;transform:scaleX(0.9790);">Angle Spin</div>
<div class="r" style="left:1770.00px;top:422.10px;width:86.80px;height:22.30px;background:#1c1c1c;border-radius:4px;"></div>
<div class="t" style="left:1802.00px;top:426.05px;font-size:14px;line-height:14px;color:#e4e4e4;transform:scaleX(0.9493);">0 %</div>
<div class="r" style="left:1860.80px;top:431.10px;width:191.90px;height:4.00px;background:#1b1b1b;border-radius:2.0px;"></div>
<div class="r" style="left:1860.75px;top:427.60px;width:4.50px;height:11.00px;background:#cfcfcf;border-radius:2.25px;"></div>
<div class="r" style="left:1624.30px;top:448.30px;width:427.70px;height:1.00px;background:#333333;"></div>
<div class="r" style="left:1637.70px;top:454.90px;width:83.10px;height:22.90px;background:#3a3a3a;border-radius:11.5px;"></div>
<div class="t" style="left:1649.20px;top:458.95px;font-size:14px;line-height:14px;color:#cfcfcf;transform:scaleX(0.9651);">Add Level</div>
<div class="t" style="left:1649.20px;top:483.75px;font-size:14px;line-height:14px;color:#bdbdbd;transform:scaleX(0.9093);">Levels</div>
<svg width="8" height="10" viewBox="0 0 8 10" style="left:1760.00px;top:486.00px;"><path d="M2 1L6 5L2 9" fill="none" stroke="#bdbdbd" stroke-width="1.3"/></svg>
<div class="r" style="left:1769.1px;top:479.4px;width:265.9000000000001px;height:159.39999999999998px;box-sizing:border-box;border:1px solid #1f1f1f;background:#2a2a2a"></div>
<div class="r" style="left:1770.10px;top:480.40px;width:263.90px;height:25.10px;background:#252525;"></div>
<div class="r" style="left:1782.00px;top:480.00px;width:1.00px;height:13.30px;background:#5e5e5e;"></div>
<div class="r" style="left:1782.00px;top:493.30px;width:10.00px;height:1.00px;background:#5e5e5e;"></div>
<svg width="20" height="18" viewBox="0 0 20 18" style="left:1792.60px;top:484.50px;"><path d="M5.00 0.00 L5.00 3.50 L0.90 6.40 L0.90 11.30 L4.60 13.80 L4.60 17.60 M5.00 3.50 L7.80 5.70 M7.80 5.70 L12.40 3.20 L17.00 5.60 L17.00 10.60 L12.40 13.00 L7.80 10.60Z M17.00 5.60 L18.90 4.40" fill="none" stroke="#f4f4f4" stroke-width="2.0"/></svg>
<div class="t" style="left:1818.30px;top:486.25px;font-size:14px;line-height:14px;color:#ec9440;transform:scaleX(0.9015);">Level.1</div>
<svg width="24" height="24" viewBox="0 0 24 24" style="left:1895.60px;top:481.30px;"><circle cx="12.0" cy="12.0" r="9" fill="none" stroke="#4fd18b" stroke-width="2"/><path d="M7.80 12.20L11.00 15.40L16.50 9.00" fill="none" stroke="#4fd18b" stroke-width="2.2"/></svg>
<svg width="15" height="15" viewBox="0 0 15 15" style="left:2037.30px;top:479.80px;"><path d="M2.25 12.75L3.00 9.30L9.30 3.00M5.70 12.00L12.00 5.70M2.25 12.75L5.70 12.00M8.25 1.80L13.20 6.75M10.50 1.20L13.80 4.50" fill="none" stroke="#9a9a9a" stroke-width="1.4"/></svg>
<div class="r" style="left:2060.50px;top:561.70px;width:3.00px;height:266.20px;background:#4a4a4a;border-radius:1.5px;"></div>
<div class="r" style="left:1624.20px;top:640.50px;width:427.80px;height:1.00px;background:#333333;"></div>
<svg width="11" height="11" viewBox="0 0 11 11" style="left:1634.00px;top:649.80px;"><path d="M2 3.75L5.5 7.25L9 3.75" fill="none" stroke="#bdbdbd" stroke-width="1.3"/></svg>
<div class="t" style="left:1649.40px;top:647.95px;font-size:14px;line-height:14px;color:#dedede;font-weight:700;transform:scaleX(0.9018);">NODE OPTIONS</div>
<svg width="12.8" height="12.8" viewBox="0 0 12.8 12.8" style="left:1635.50px;top:677.70px;"><path d="M6.4 2.0L10.8 6.4L6.4 10.8L2.0 6.4Z" fill="none" stroke="#b0b0b0" stroke-width="1.5"/></svg>
<div class="t" style="left:1657.50px;top:676.65px;font-size:14px;line-height:14px;color:#bdbdbd;transform:scaleX(0.9685);">Affects</div>
<div class="r" style="left:1725.20px;top:673.40px;width:328.40px;height:22.20px;background:#3b3b3b;border-radius:4px;"></div>
<div class="t" style="left:1732.30px;top:676.65px;font-size:14px;line-height:14px;color:#d0d0d0;transform:scaleX(0.9481);">Single</div>
<svg width="10" height="6" viewBox="0 0 10 6" style="left:2038.00px;top:682.00px;"><path d="M1 1H9L5 5Z" fill="#bbbbbb"/></svg>
<svg width="12.8" height="12.8" viewBox="0 0 12.8 12.8" style="left:1635.50px;top:703.80px;"><path d="M6.4 2.0L10.8 6.4L6.4 10.8L2.0 6.4Z" fill="none" stroke="#b0b0b0" stroke-width="1.5"/></svg>
<div class="t" style="left:1657.50px;top:702.95px;font-size:14px;line-height:14px;color:#bdbdbd;transform:scaleX(0.9296);">Step Level</div>
<div class="r" style="left:1725.20px;top:699.50px;width:86.60px;height:22.30px;background:#1c1c1c;border-radius:4px;"></div>
<div class="t" style="left:1764.30px;top:702.95px;font-size:14px;line-height:14px;color:#e4e4e4;transform:scaleX(0.9632);">2</div>
<div class="r" style="left:1815.80px;top:708.00px;width:237.80px;height:4.00px;background:#1b1b1b;border-radius:2.0px;"></div>
<div class="r" style="left:1815.95px;top:704.50px;width:4.50px;height:11.00px;background:#cfcfcf;border-radius:2.25px;"></div>
<svg width="12.8" height="12.8" viewBox="0 0 12.8 12.8" style="left:1635.50px;top:729.80px;"><path d="M6.4 2.0L10.8 6.4L6.4 10.8L2.0 6.4Z" fill="none" stroke="#b0b0b0" stroke-width="1.5"/></svg>
<div class="t" style="left:1657.50px;top:728.95px;font-size:14px;line-height:14px;color:#bdbdbd;transform:scaleX(0.9357);">Type</div>
<div class="r" style="left:1725.20px;top:725.70px;width:328.40px;height:21.70px;background:#3b3b3b;border-radius:4px;"></div>
<div class="t" style="left:1732.30px;top:728.95px;font-size:14px;line-height:14px;color:#d0d0d0;transform:scaleX(0.9914);">Angle</div>
<svg width="10" height="6" viewBox="0 0 10 6" style="left:2038.00px;top:734.00px;"><path d="M1 1H9L5 5Z" fill="#bbbbbb"/></svg>
<div class="r" style="left:1633.00px;top:750.10px;width:420.00px;height:1.00px;background:#333333;"></div>
<svg width="11" height="11" viewBox="0 0 11 11" style="left:1642.00px;top:760.40px;"><path d="M2 3.75L5.5 7.25L9 3.75" fill="none" stroke="#bdbdbd" stroke-width="1.3"/></svg>
<div class="t" style="left:1657.00px;top:759.05px;font-size:14px;line-height:14px;color:#dedede;font-weight:700;transform:scaleX(0.8870);">ANGLE OPTIONS</div>
<svg width="12.8" height="12.8" viewBox="0 0 12.8 12.8" style="left:1643.70px;top:789.70px;"><path d="M6.4 2.0L10.8 6.4L6.4 10.8L2.0 6.4Z" fill="none" stroke="#b0b0b0" stroke-width="1.5"/></svg>
<div class="t" style="left:1665.30px;top:789.15px;font-size:14px;line-height:14px;color:#bdbdbd;transform:scaleX(0.9831);">Angle Open</div>
<div class="r" style="left:1748.30px;top:785.50px;width:86.50px;height:22.10px;background:#1c1c1c;border-radius:4px;"></div>
<div class="t" style="left:1782.90px;top:789.15px;font-size:14px;line-height:14px;color:#e4e4e4;transform:scaleX(0.9552);">0 °</div>
<div class="r" style="left:1838.80px;top:794.10px;width:214.80px;height:4.00px;background:#1b1b1b;border-radius:2.0px;"></div>
<div class="r" style="left:1838.35px;top:790.60px;width:4.50px;height:11.00px;background:#cfcfcf;border-radius:2.25px;"></div>
<svg width="12.8" height="12.8" viewBox="0 0 12.8 12.8" style="left:1643.70px;top:816.70px;"><path d="M6.4 2.0L10.8 6.4L6.4 10.8L2.0 6.4Z" fill="none" stroke="#b0b0b0" stroke-width="1.5"/></svg>
<div class="t" style="left:1665.30px;top:816.15px;font-size:14px;line-height:14px;color:#bdbdbd;transform:scaleX(0.9674);">Angle Radial</div>
<div class="r" style="left:1748.30px;top:812.50px;width:86.50px;height:22.10px;background:#1c1c1c;border-radius:4px;"></div>
<div class="t" style="left:1779.90px;top:816.15px;font-size:14px;line-height:14px;color:#e4e4e4;transform:scaleX(0.9327);">0 %</div>
<div class="r" style="left:1838.80px;top:821.10px;width:214.80px;height:4.00px;background:#1b1b1b;border-radius:2.0px;"></div>
<div class="r" style="left:1838.35px;top:817.60px;width:4.50px;height:11.00px;background:#cfcfcf;border-radius:2.25px;"></div>
<svg width="12.8" height="12.8" viewBox="0 0 12.8 12.8" style="left:1643.70px;top:843.70px;"><path d="M6.4 2.0L10.8 6.4L6.4 10.8L2.0 6.4Z" fill="none" stroke="#b0b0b0" stroke-width="1.5"/></svg>
<div class="t" style="left:1665.30px;top:843.15px;font-size:14px;line-height:14px;color:#bdbdbd;transform:scaleX(0.9761);">Angle Spin</div>
<div class="r" style="left:1748.30px;top:839.50px;width:86.50px;height:22.10px;background:#1c1c1c;border-radius:4px;"></div>
<div class="t" style="left:1782.90px;top:843.15px;font-size:14px;line-height:14px;color:#e4e4e4;transform:scaleX(0.9552);">0 °</div>
<div class="r" style="left:1838.80px;top:848.10px;width:214.80px;height:4.00px;background:#1b1b1b;border-radius:2.0px;"></div>
<div class="r" style="left:1838.35px;top:844.60px;width:4.50px;height:11.00px;background:#cfcfcf;border-radius:2.25px;"></div>
<div class="r" style="left:2652.50px;top:118.50px;width:462.50px;height:752.00px;background:#2a2a2a;"></div>
<div class="r" style="left:2651.00px;top:117.50px;width:1.50px;height:753.00px;background:#454545;"></div>
<div class="r" style="left:2652.50px;top:117.50px;width:1.00px;height:753.00px;background:#1f1f1f;"></div>
<div class="r" style="left:2652.50px;top:117.50px;width:462.50px;height:24.00px;background:#2a2a2a;"></div>
<div class="r" style="left:2652.50px;top:141.50px;width:462.50px;height:1.00px;background:#1c1c1c;"></div>
<div class="r" style="left:2652.50px;top:142.50px;width:462.50px;height:97.00px;background:#2b2b2b;"></div>
<div class="r" style="left:2652.50px;top:142.50px;width:462.50px;height:20.00px;background:#272727;"></div>
<div class="r" style="left:2800.00px;top:162.50px;width:1.00px;height:77.00px;background:#1d1d1d;"></div>
<div class="r" style="left:2652.50px;top:239.50px;width:462.50px;height:0.50px;background:#1e1e1e;"></div>
<div class="r" style="left:2652.50px;top:240.00px;width:462.50px;height:1.00px;background:#303030;"></div>
<div class="r" style="left:2652.50px;top:242.00px;width:462.50px;height:15.60px;background:#1e1e1e;"></div>
<svg width="14.1" height="9.2" viewBox="0 0 14.1 9.2" style="left:2658.80px;top:122.80px;"><rect x="0" y="0.00" width="14.1" height="1.29" fill="#9a9a9a"/><rect x="0" y="3.96" width="14.1" height="1.29" fill="#9a9a9a"/><rect x="0" y="7.91" width="14.1" height="1.29" fill="#9a9a9a"/></svg>
<div class="t" style="left:2683.50px;top:120.15px;font-size:14px;line-height:14px;color:#bdbdbd;transform:scaleX(0.9043);">File</div>
<div class="t" style="left:2718.80px;top:120.15px;font-size:14px;line-height:14px;color:#bdbdbd;transform:scaleX(0.9244);">Edit</div>
<div class="t" style="left:2755.90px;top:120.15px;font-size:14px;line-height:14px;color:#bdbdbd;transform:scaleX(0.9836);">View</div>
<div class="t" style="left:2800.50px;top:120.15px;font-size:14px;line-height:14px;color:#bdbdbd;transform:scaleX(0.9960);">Object</div>
<div class="t" style="left:2855.40px;top:120.15px;font-size:14px;line-height:14px;color:#bdbdbd;transform:scaleX(0.8995);">Tags</div>
<div class="t" style="left:2897.40px;top:120.15px;font-size:14px;line-height:14px;color:#bdbdbd;transform:scaleX(0.9683);">Bookmarks</div>
<svg width="14" height="14" viewBox="0 0 14 14" style="left:3039.00px;top:120.60px;"><circle cx="5.88" cy="5.88" r="3.92" fill="none" stroke="#9a9a9a" stroke-width="1.5"/><path d="M8.68 8.68L12.88 12.88" stroke="#9a9a9a" stroke-width="1.7999999999999998"/></svg>
<svg width="14" height="14" viewBox="0 0 14 14" style="left:3059.50px;top:120.60px;"><path d="M2.10 6.30L7.00 1.40L11.90 6.30V12.88H8.68V9.10H5.32V12.88H2.10Z" fill="none" stroke="#9a9a9a" stroke-width="1.5"/></svg>
<svg width="14" height="14" viewBox="0 0 14 14" style="left:3080.00px;top:120.60px;"><path d="M0.70 2.80H13.30M3.08 7.00H10.92M5.60 11.20H8.40" stroke="#9a9a9a" stroke-width="1.7999999999999998"/></svg>
<svg width="14" height="14" viewBox="0 0 14 14" style="left:3099.60px;top:120.60px;"><path d="M6.30 1.12H1.40V12.88H12.60V7.70M5.60 8.40L12.88 1.12M8.40 1.12H12.88V5.60" fill="none" stroke="#9a9a9a" stroke-width="1.5"/></svg>
<div class="r" style="left:2661.00px;top:142.50px;width:1.00px;height:7.00px;background:#5a5a5a;"></div>
<svg width="9" height="9" viewBox="0 0 9 9" style="left:2656.80px;top:148.90px;"><rect x="0.6" y="0.6" width="7.80" height="7.80" fill="none" stroke="#8a8a8a" stroke-width="1"/><path d="M2.25 4.5H6.75M4.5 2.25V6.75" stroke="#8a8a8a" stroke-width="1"/></svg>
<svg width="15" height="15" viewBox="0 0 15 15" style="left:2670.00px;top:146.10px;"><rect x="0.47" y="0.47" width="14.05" height="14.05" rx="1.74" fill="#44e6a4" stroke="#0d3324" stroke-width="0.95"/><path d="M7.50 1.50L13.74 12.08L1.26 12.08Z" fill="#ffffff" stroke="#137048" stroke-width="0.71"/><path d="M4.89 7.42L10.11 7.42L7.50 11.53Z" fill="#ffffff" stroke="#111111" stroke-width="1.11"/></svg>
<div class="t" style="left:2689.40px;top:145.85px;font-size:14px;line-height:14px;color:#cfcfcf;transform:scaleX(0.9736);">mtFractal</div>
<div class="r" style="left:2757.30px;top:149.00px;width:9.70px;height:9.00px;background:#6a6a6a;border-radius:2px;"></div>
<svg width="10" height="9" viewBox="0 0 10 9" style="left:2757.30px;top:149.00px;"><path d="M2.5 7L7.5 2" stroke="#2a2a2a" stroke-width="1.4"/></svg>
<div class="r" style="left:2773.40px;top:144.50px;width:5.80px;height:5.80px;background:#5e5e5e;border-radius:3px;"></div>
<div class="r" style="left:2773.40px;top:154.70px;width:5.80px;height:5.80px;background:#5e5e5e;border-radius:3px;"></div>
<svg width="15" height="10" viewBox="0 0 15 10" style="left:2782.00px;top:146.00px;"><path d="M1.5 5L5.5 8.5L13.5 1.5" fill="none" stroke="#5fd58a" stroke-width="2"/></svg>
<svg width="8" height="8" viewBox="0 0 8 8" style="left:2657.00px;top:246.10px;"><path d="M1.20 1.20L6.80 6.80M6.80 1.20L1.20 6.80" stroke="#bdbdbd" stroke-width="1.4"/></svg>
<div class="t" style="left:2677.40px;top:246.15px;font-size:14px;line-height:14px;color:#d2d2d2;transform:scaleX(1.0247);">Attributes</div>
<svg width="14.6" height="10.1" viewBox="0 0 14.6 10.1" style="left:2658.70px;top:274.10px;"><rect x="0" y="0.00" width="14.6" height="1.41" fill="#ececec"/><rect x="0" y="4.34" width="14.6" height="1.41" fill="#ececec"/><rect x="0" y="8.69" width="14.6" height="1.41" fill="#ececec"/></svg>
<div class="t" style="left:2683.60px;top:272.35px;font-size:14px;line-height:14px;color:#bdbdbd;transform:scaleX(1.0108);">Mode</div>
<div class="t" style="left:2734.40px;top:272.35px;font-size:14px;line-height:14px;color:#bdbdbd;transform:scaleX(0.9368);">Edit</div>
<div class="t" style="left:2772.20px;top:272.35px;font-size:14px;line-height:14px;color:#bdbdbd;transform:scaleX(0.9489);">User Data</div>
<svg width="14" height="14" viewBox="0 0 14 14" style="left:2960.00px;top:272.00px;"><path d="M13.30 7.0H1.40M6.30 2.10L1.40 7.0L6.30 11.90" fill="none" stroke="#a0a0a0" stroke-width="1.5"/></svg>
<svg width="14" height="14" viewBox="0 0 14 14" style="left:2980.00px;top:272.00px;"><path d="M0.70 7.0H12.60M7.70 2.10L12.60 7.0L7.70 11.90" fill="none" stroke="#505050" stroke-width="1.5"/></svg>
<svg width="14" height="14" viewBox="0 0 14 14" style="left:3000.00px;top:272.00px;"><path d="M7.0 13.30V1.40M2.10 6.30L7.0 1.40L11.90 6.30" fill="none" stroke="#a0a0a0" stroke-width="1.5"/></svg>
<svg width="14" height="14" viewBox="0 0 14 14" style="left:3019.50px;top:272.00px;"><circle cx="5.88" cy="5.88" r="3.92" fill="none" stroke="#a0a0a0" stroke-width="1.5"/><path d="M8.68 8.68L12.88 12.88" stroke="#a0a0a0" stroke-width="1.7999999999999998"/></svg>
<svg width="14" height="14" viewBox="0 0 14 14" style="left:3040.00px;top:272.00px;"><path d="M0.70 2.80H13.30M3.08 7.00H10.92M5.60 11.20H8.40" stroke="#a0a0a0" stroke-width="1.7999999999999998"/></svg>
<svg width="14" height="14" viewBox="0 0 14 14" style="left:3059.70px;top:272.00px;"><rect x="2.10" y="6.30" width="9.80" height="7.00" rx="1" fill="#f0f0f0"/><path d="M4.20 6.72V4.48A2.80 2.80 0 0 1 9.80 4.48V6.72" fill="none" stroke="#f0f0f0" stroke-width="1.5"/></svg>
<svg width="14" height="14" viewBox="0 0 14 14" style="left:3080.00px;top:272.00px;"><circle cx="7.0" cy="7.0" r="5.88" fill="none" stroke="#a0a0a0" stroke-width="1.5"/><circle cx="7.0" cy="7.0" r="2.10" fill="#a0a0a0"/></svg>
<svg width="14" height="14" viewBox="0 0 14 14" style="left:3099.60px;top:272.00px;"><path d="M6.30 1.12H1.40V12.88H12.60V7.70M5.60 8.40L12.88 1.12M8.40 1.12H12.88V5.60" fill="none" stroke="#a0a0a0" stroke-width="1.5"/></svg>
<div class="r" style="left:2652.50px;top:292.50px;width:462.50px;height:1.00px;background:#1f1f1f;"></div>
<svg width="19" height="19" viewBox="0 0 19 19" style="left:2660.60px;top:299.60px;"><rect x="0.60" y="0.60" width="17.80" height="17.80" rx="2.20" fill="#44e6a4" stroke="#0d3324" stroke-width="1.20"/><path d="M9.50 1.90L17.40 15.30L1.60 15.30Z" fill="#ffffff" stroke="#137048" stroke-width="0.90"/><path d="M6.20 9.40L12.80 9.40L9.50 14.60Z" fill="#ffffff" stroke="#111111" stroke-width="1.40"/></svg>
<div class="t" style="left:2685.30px;top:302.45px;font-size:14px;line-height:14px;color:#cfcfcf;transform:scaleX(0.9902);">mtFractal Object [mtFractal]</div>
<div class="r" style="left:2993.00px;top:298.00px;width:116.80px;height:22.60px;background:#383838;border-radius:5px;"></div>
<div class="r" style="left:3090.30px;top:298.00px;width:1.00px;height:22.60px;background:#2a2a2a;"></div>
<div class="t" style="left:2999.80px;top:302.45px;font-size:14px;line-height:14px;color:#bdbdbd;transform:scaleX(0.9827);">Custom</div>
<svg width="10" height="6" viewBox="0 0 10 6" style="left:3095.00px;top:306.00px;"><path d="M1 1H9L5 5Z" fill="#bbbbbb"/></svg>
<div class="r" style="left:2660.90px;top:325.00px;width:57.10px;height:25.70px;background:#3a3a3a;border-radius:4px;"></div>
<div class="t" style="left:2674.20px;top:331.15px;font-size:14px;line-height:14px;color:#c6c6c6;transform:scaleX(0.9055);">Basic</div>
<div class="r" style="left:2722.00px;top:325.00px;width:100.60px;height:25.70px;background:#3a3a3a;border-radius:4px;"></div>
<div class="t" style="left:2735.30px;top:331.15px;font-size:14px;line-height:14px;color:#c6c6c6;transform:scaleX(0.9816);">Coordinates</div>
<div class="r" style="left:2827.00px;top:325.00px;width:67.00px;height:25.70px;background:#5b5ba6;border-radius:4px;"></div>
<div class="t" style="left:2840.30px;top:331.15px;font-size:14px;line-height:14px;color:#ffffff;">Object</div>
<div class="r" style="left:2898.20px;top:325.00px;width:90.20px;height:25.70px;background:#3a3a3a;border-radius:4px;"></div>
<div class="t" style="left:2910.90px;top:331.15px;font-size:14px;line-height:14px;color:#c6c6c6;transform:scaleX(0.9515);">X-Particles</div>
<div class="r" style="left:2993.00px;top:325.00px;width:70.50px;height:25.70px;background:#3a3a3a;border-radius:4px;"></div>
<div class="t" style="left:3005.80px;top:331.15px;font-size:14px;line-height:14px;color:#c6c6c6;transform:scaleX(0.9738);">Display</div>
<svg width="12.8" height="12.8" viewBox="0 0 12.8 12.8" style="left:2669.80px;top:360.70px;"><path d="M6.4 2.0L10.8 6.4L6.4 10.8L2.0 6.4Z" fill="none" stroke="#bdbdbd" stroke-width="1.2"/></svg>
<div class="t" style="left:2691.20px;top:360.05px;font-size:14px;line-height:14px;color:#bdbdbd;transform:scaleX(0.9886);">Angle Open</div>
<div class="r" style="left:2812.00px;top:356.10px;width:86.80px;height:22.30px;background:#1c1c1c;border-radius:4px;"></div>
<div class="t" style="left:2843.00px;top:360.05px;font-size:14px;line-height:14px;color:#e4e4e4;transform:scaleX(0.9736);">45 °</div>
<div class="r" style="left:2902.80px;top:365.10px;width:191.90px;height:4.00px;background:#1b1b1b;border-radius:2.0px;"></div>
<div class="r" style="left:2902.80px;top:365.10px;width:47.60px;height:4.00px;background:#5e5ea6;border-radius:2.0px;"></div>
<div class="r" style="left:2948.15px;top:361.60px;width:4.50px;height:11.00px;background:#cfcfcf;border-radius:2.25px;"></div>
<svg width="12.8" height="12.8" viewBox="0 0 12.8 12.8" style="left:2669.80px;top:388.00px;"><path d="M6.4 2.0L10.8 6.4L6.4 10.8L2.0 6.4Z" fill="none" stroke="#bdbdbd" stroke-width="1.2"/></svg>
<div class="t" style="left:2691.20px;top:387.35px;font-size:14px;line-height:14px;color:#bdbdbd;transform:scaleX(0.9699);">Angle Radial</div>
<div class="r" style="left:2812.00px;top:383.40px;width:86.80px;height:22.30px;background:#1c1c1c;border-radius:4px;"></div>
<div class="t" style="left:2836.90px;top:387.35px;font-size:14px;line-height:14px;color:#e4e4e4;transform:scaleX(0.9321);">100 %</div>
<div class="r" style="left:2902.80px;top:392.40px;width:191.90px;height:4.00px;background:#1b1b1b;border-radius:2.0px;"></div>
<div class="r" style="left:2902.80px;top:392.40px;width:190.20px;height:4.00px;background:#5e5ea6;border-radius:2.0px;"></div>
<div class="r" style="left:3090.75px;top:388.90px;width:4.50px;height:11.00px;background:#cfcfcf;border-radius:2.25px;"></div>
<svg width="12.8" height="12.8" viewBox="0 0 12.8 12.8" style="left:2669.80px;top:414.70px;"><path d="M6.4 2.0L10.8 6.4L6.4 10.8L2.0 6.4Z" fill="none" stroke="#bdbdbd" stroke-width="1.2"/></svg>
<div class="t" style="left:2691.20px;top:414.05px;font-size:14px;line-height:14px;color:#bdbdbd;transform:scaleX(0.9790);">Angle Spin</div>
<div class="r" style="left:2812.00px;top:410.10px;width:86.80px;height:22.30px;background:#1c1c1c;border-radius:4px;"></div>
<div class="t" style="left:2844.00px;top:414.05px;font-size:14px;line-height:14px;color:#e4e4e4;transform:scaleX(0.9493);">0 %</div>
<div class="r" style="left:2902.80px;top:419.10px;width:191.90px;height:4.00px;background:#1b1b1b;border-radius:2.0px;"></div>
<div class="r" style="left:2902.75px;top:415.60px;width:4.50px;height:11.00px;background:#cfcfcf;border-radius:2.25px;"></div>
<div class="r" style="left:2666.30px;top:436.30px;width:427.70px;height:1.00px;background:#333333;"></div>
<div class="r" style="left:2679.70px;top:442.90px;width:83.10px;height:22.90px;background:#3a3a3a;border-radius:11.5px;"></div>
<div class="t" style="left:2691.20px;top:446.95px;font-size:14px;line-height:14px;color:#cfcfcf;transform:scaleX(0.9651);">Add Level</div>
<div class="t" style="left:2691.20px;top:471.75px;font-size:14px;line-height:14px;color:#bdbdbd;transform:scaleX(0.9093);">Levels</div>
<svg width="8" height="10" viewBox="0 0 8 10" style="left:2802.00px;top:474.00px;"><path d="M2 1L6 5L2 9" fill="none" stroke="#bdbdbd" stroke-width="1.3"/></svg>
<div class="r" style="left:2811.1px;top:467.4px;width:265.9000000000001px;height:159.39999999999998px;box-sizing:border-box;border:1px solid #1f1f1f;background:#2a2a2a"></div>
<div class="r" style="left:2812.10px;top:468.40px;width:263.90px;height:25.10px;background:#252525;"></div>
<div class="r" style="left:2824.00px;top:468.00px;width:1.00px;height:13.30px;background:#5e5e5e;"></div>
<div class="r" style="left:2824.00px;top:481.30px;width:10.00px;height:1.00px;background:#5e5e5e;"></div>
<svg width="20" height="18" viewBox="0 0 20 18" style="left:2834.60px;top:472.50px;"><path d="M5.00 0.00 L5.00 3.50 L0.90 6.40 L0.90 11.30 L4.60 13.80 L4.60 17.60 M5.00 3.50 L7.80 5.70 M7.80 5.70 L12.40 3.20 L17.00 5.60 L17.00 10.60 L12.40 13.00 L7.80 10.60Z M17.00 5.60 L18.90 4.40" fill="none" stroke="#f4f4f4" stroke-width="2.0"/></svg>
<div class="t" style="left:2860.30px;top:474.25px;font-size:14px;line-height:14px;color:#ec9440;transform:scaleX(0.9015);">Level.1</div>
<svg width="24" height="24" viewBox="0 0 24 24" style="left:2937.60px;top:469.30px;"><circle cx="12.0" cy="12.0" r="9" fill="none" stroke="#4fd18b" stroke-width="2"/><path d="M7.80 12.20L11.00 15.40L16.50 9.00" fill="none" stroke="#4fd18b" stroke-width="2.2"/></svg>
<div class="r" style="left:2824.00px;top:480.50px;width:1.00px;height:26.90px;background:#5e5e5e;"></div>
<div class="r" style="left:2824.00px;top:507.40px;width:10.00px;height:1.00px;background:#5e5e5e;"></div>
<svg width="20" height="18" viewBox="0 0 20 18" style="left:2834.60px;top:498.60px;"><path d="M5.00 0.00 L5.00 3.50 L0.90 6.40 L0.90 11.30 L4.60 13.80 L4.60 17.60 M5.00 3.50 L7.80 5.70 M7.80 5.70 L12.40 3.20 L17.00 5.60 L17.00 10.60 L12.40 13.00 L7.80 10.60Z M17.00 5.60 L18.90 4.40" fill="none" stroke="#f4f4f4" stroke-width="2.0"/></svg>
<div class="t" style="left:2860.30px;top:500.35px;font-size:14px;line-height:14px;color:#ec9440;transform:scaleX(0.9015);">Level.2</div>
<svg width="24" height="24" viewBox="0 0 24 24" style="left:2937.60px;top:495.40px;"><circle cx="12.0" cy="12.0" r="9" fill="none" stroke="#4fd18b" stroke-width="2"/><path d="M7.80 12.20L11.00 15.40L16.50 9.00" fill="none" stroke="#4fd18b" stroke-width="2.2"/></svg>
<svg width="15" height="15" viewBox="0 0 15 15" style="left:3079.30px;top:467.80px;"><path d="M2.25 12.75L3.00 9.30L9.30 3.00M5.70 12.00L12.00 5.70M2.25 12.75L5.70 12.00M8.25 1.80L13.20 6.75M10.50 1.20L13.80 4.50" fill="none" stroke="#9a9a9a" stroke-width="1.4"/></svg>
<div class="r" style="left:3102.30px;top:567.80px;width:3.00px;height:267.40px;background:#4a4a4a;border-radius:1.5px;"></div>
<div class="r" style="left:2666.20px;top:628.50px;width:427.80px;height:1.00px;background:#333333;"></div>
<svg width="11" height="11" viewBox="0 0 11 11" style="left:2676.00px;top:637.80px;"><path d="M2 3.75L5.5 7.25L9 3.75" fill="none" stroke="#bdbdbd" stroke-width="1.3"/></svg>
<div class="t" style="left:2691.40px;top:635.95px;font-size:14px;line-height:14px;color:#dedede;font-weight:700;transform:scaleX(0.9018);">NODE OPTIONS</div>
<svg width="12.8" height="12.8" viewBox="0 0 12.8 12.8" style="left:2677.50px;top:665.70px;"><path d="M6.4 2.0L10.8 6.4L6.4 10.8L2.0 6.4Z" fill="none" stroke="#b0b0b0" stroke-width="1.5"/></svg>
<div class="t" style="left:2699.50px;top:664.65px;font-size:14px;line-height:14px;color:#bdbdbd;transform:scaleX(0.9685);">Affects</div>
<div class="r" style="left:2767.20px;top:661.40px;width:328.40px;height:22.20px;background:#3b3b3b;border-radius:4px;"></div>
<div class="t" style="left:2774.30px;top:664.65px;font-size:14px;line-height:14px;color:#d0d0d0;transform:scaleX(0.9481);">Single</div>
<svg width="10" height="6" viewBox="0 0 10 6" style="left:3080.00px;top:670.00px;"><path d="M1 1H9L5 5Z" fill="#bbbbbb"/></svg>
<svg width="12.8" height="12.8" viewBox="0 0 12.8 12.8" style="left:2677.50px;top:691.80px;"><path d="M6.4 2.0L10.8 6.4L6.4 10.8L2.0 6.4Z" fill="none" stroke="#b0b0b0" stroke-width="1.5"/></svg>
<div class="t" style="left:2699.50px;top:690.95px;font-size:14px;line-height:14px;color:#bdbdbd;transform:scaleX(0.9296);">Step Level</div>
<div class="r" style="left:2767.20px;top:687.50px;width:86.60px;height:22.30px;background:#1c1c1c;border-radius:4px;"></div>
<div class="t" style="left:2806.30px;top:690.95px;font-size:14px;line-height:14px;color:#e4e4e4;transform:scaleX(0.9632);">3</div>
<div class="r" style="left:2857.80px;top:696.00px;width:237.80px;height:4.00px;background:#1b1b1b;border-radius:2.0px;"></div>
<div class="r" style="left:2857.80px;top:696.00px;width:30.10px;height:4.00px;background:#5e5ea6;border-radius:2.0px;"></div>
<div class="r" style="left:2885.65px;top:692.50px;width:4.50px;height:11.00px;background:#cfcfcf;border-radius:2.25px;"></div>
<svg width="12.8" height="12.8" viewBox="0 0 12.8 12.8" style="left:2677.50px;top:717.80px;"><path d="M6.4 2.0L10.8 6.4L6.4 10.8L2.0 6.4Z" fill="none" stroke="#b0b0b0" stroke-width="1.5"/></svg>
<div class="t" style="left:2699.50px;top:716.95px;font-size:14px;line-height:14px;color:#bdbdbd;transform:scaleX(0.9357);">Type</div>
<div class="r" style="left:2767.20px;top:713.70px;width:328.40px;height:21.70px;background:#3b3b3b;border-radius:4px;"></div>
<div class="t" style="left:2774.30px;top:716.95px;font-size:14px;line-height:14px;color:#d0d0d0;transform:scaleX(0.9914);">Angle</div>
<svg width="10" height="6" viewBox="0 0 10 6" style="left:3080.00px;top:722.00px;"><path d="M1 1H9L5 5Z" fill="#bbbbbb"/></svg>
<div class="r" style="left:2675.00px;top:738.10px;width:420.00px;height:1.00px;background:#333333;"></div>
<svg width="11" height="11" viewBox="0 0 11 11" style="left:2684.00px;top:748.40px;"><path d="M2 3.75L5.5 7.25L9 3.75" fill="none" stroke="#bdbdbd" stroke-width="1.3"/></svg>
<div class="t" style="left:2699.00px;top:747.05px;font-size:14px;line-height:14px;color:#dedede;font-weight:700;transform:scaleX(0.8870);">ANGLE OPTIONS</div>
<svg width="12.8" height="12.8" viewBox="0 0 12.8 12.8" style="left:2685.70px;top:777.70px;"><path d="M6.4 2.0L10.8 6.4L6.4 10.8L2.0 6.4Z" fill="none" stroke="#b0b0b0" stroke-width="1.5"/></svg>
<div class="t" style="left:2707.30px;top:777.15px;font-size:14px;line-height:14px;color:#bdbdbd;transform:scaleX(0.9831);">Angle Open</div>
<div class="r" style="left:2790.30px;top:773.50px;width:86.50px;height:22.10px;background:#1c1c1c;border-radius:4px;"></div>
<div class="t" style="left:2824.90px;top:777.15px;font-size:14px;line-height:14px;color:#e4e4e4;transform:scaleX(0.9552);">0 °</div>
<div class="r" style="left:2880.80px;top:782.10px;width:214.80px;height:4.00px;background:#1b1b1b;border-radius:2.0px;"></div>
<div class="r" style="left:2880.35px;top:778.60px;width:4.50px;height:11.00px;background:#cfcfcf;border-radius:2.25px;"></div>
<svg width="12.8" height="12.8" viewBox="0 0 12.8 12.8" style="left:2685.70px;top:804.70px;"><path d="M6.4 2.0L10.8 6.4L6.4 10.8L2.0 6.4Z" fill="none" stroke="#b0b0b0" stroke-width="1.5"/></svg>
<div class="t" style="left:2707.30px;top:804.15px;font-size:14px;line-height:14px;color:#bdbdbd;transform:scaleX(0.9674);">Angle Radial</div>
<div class="r" style="left:2790.30px;top:800.50px;width:86.50px;height:22.10px;background:#1c1c1c;border-radius:4px;"></div>
<div class="t" style="left:2821.90px;top:804.15px;font-size:14px;line-height:14px;color:#e4e4e4;transform:scaleX(0.9327);">0 %</div>
<div class="r" style="left:2880.80px;top:809.10px;width:214.80px;height:4.00px;background:#1b1b1b;border-radius:2.0px;"></div>
<div class="r" style="left:2880.35px;top:805.60px;width:4.50px;height:11.00px;background:#cfcfcf;border-radius:2.25px;"></div>
<svg width="12.8" height="12.8" viewBox="0 0 12.8 12.8" style="left:2685.70px;top:831.70px;"><path d="M6.4 2.0L10.8 6.4L6.4 10.8L2.0 6.4Z" fill="none" stroke="#b0b0b0" stroke-width="1.5"/></svg>
<div class="t" style="left:2707.30px;top:831.15px;font-size:14px;line-height:14px;color:#bdbdbd;transform:scaleX(0.9761);">Angle Spin</div>
<div class="r" style="left:2790.30px;top:827.50px;width:86.50px;height:22.10px;background:#1c1c1c;border-radius:4px;"></div>
<div class="t" style="left:2824.90px;top:831.15px;font-size:14px;line-height:14px;color:#e4e4e4;transform:scaleX(0.9552);">0 °</div>
<div class="r" style="left:2880.80px;top:836.10px;width:214.80px;height:4.00px;background:#1b1b1b;border-radius:2.0px;"></div>
<div class="r" style="left:2880.35px;top:832.60px;width:4.50px;height:11.00px;background:#cfcfcf;border-radius:2.25px;"></div>
<div class="r" style="left:1062px;top:115px;width:1016px;height:758px;box-sizing:border-box;border:2.5px solid #ffffff;"></div>
<div class="r" style="left:2102px;top:115px;width:1015px;height:758px;box-sizing:border-box;border:2.5px solid #ffffff;"></div>
<div class="r" style="left:628.00px;top:117.50px;width:406.50px;height:753.00px;background:#2a2a2a;"></div>
<div class="r" style="left:626.30px;top:117.50px;width:1.70px;height:753.00px;background:#454545;"></div>
<div class="r" style="left:628.00px;top:117.50px;width:1.00px;height:753.00px;background:#1f1f1f;"></div>
<div class="r" style="left:628.00px;top:117.50px;width:406.50px;height:20.00px;background:#2a2a2a;"></div>
<div class="r" style="left:628.00px;top:137.50px;width:406.50px;height:1.00px;background:#1c1c1c;"></div>
<div class="r" style="left:628.00px;top:138.50px;width:406.50px;height:103.00px;background:#2b2b2b;"></div>
<div class="r" style="left:628.00px;top:138.50px;width:406.50px;height:18.50px;background:#272727;"></div>
<div class="r" style="left:757.00px;top:157.00px;width:1.00px;height:84.50px;background:#1d1d1d;"></div>
<div class="r" style="left:628.00px;top:241.50px;width:406.50px;height:1.00px;background:#1b1b1b;"></div>
<div class="r" style="left:628.00px;top:242.50px;width:406.50px;height:16.10px;background:#1e1e1e;"></div>
<svg width="12.8" height="9.0" viewBox="0 0 12.8 9.0" style="left:633.20px;top:122.20px;"><rect x="0" y="0.00" width="12.8" height="1.26" fill="#9a9a9a"/><rect x="0" y="3.87" width="12.8" height="1.26" fill="#9a9a9a"/><rect x="0" y="7.74" width="12.8" height="1.26" fill="#9a9a9a"/></svg>
<div class="t" style="left:655.00px;top:121.03px;font-size:12.25px;line-height:12.25px;color:#bdbdbd;transform:scaleX(0.9119);">File</div>
<div class="t" style="left:685.70px;top:121.03px;font-size:12.25px;line-height:12.25px;color:#bdbdbd;transform:scaleX(0.9332);">Edit</div>
<div class="t" style="left:718.50px;top:121.03px;font-size:12.25px;line-height:12.25px;color:#bdbdbd;transform:scaleX(0.9760);">View</div>
<div class="t" style="left:757.30px;top:121.03px;font-size:12.25px;line-height:12.25px;color:#bdbdbd;transform:scaleX(0.9942);">Object</div>
<div class="t" style="left:805.20px;top:121.03px;font-size:12.25px;line-height:12.25px;color:#bdbdbd;transform:scaleX(0.9198);">Tags</div>
<div class="t" style="left:842.10px;top:121.03px;font-size:12.25px;line-height:12.25px;color:#bdbdbd;transform:scaleX(0.9744);">Bookmarks</div>
<svg width="12.5" height="12.5" viewBox="0 0 12.5 12.5" style="left:966.75px;top:121.25px;"><circle cx="5.25" cy="5.25" r="3.50" fill="none" stroke="#9a9a9a" stroke-width="1.4"/><path d="M7.75 7.75L11.50 11.50" stroke="#9a9a9a" stroke-width="1.68"/></svg>
<svg width="12.5" height="12.5" viewBox="0 0 12.5 12.5" style="left:984.25px;top:121.25px;"><path d="M1.88 5.62L6.25 1.25L10.62 5.62V11.50H7.75V8.12H4.75V11.50H1.88Z" fill="none" stroke="#9a9a9a" stroke-width="1.4"/></svg>
<svg width="12.5" height="12.5" viewBox="0 0 12.5 12.5" style="left:1002.05px;top:121.25px;"><path d="M0.62 2.50H11.88M2.75 6.25H9.75M5.00 10.00H7.50" stroke="#9a9a9a" stroke-width="1.68"/></svg>
<svg width="12.5" height="12.5" viewBox="0 0 12.5 12.5" style="left:1019.55px;top:121.25px;"><path d="M5.62 1.00H1.25V11.50H11.25V6.88M5.00 7.50L11.50 1.00M7.50 1.00H11.50V5.00" fill="none" stroke="#9a9a9a" stroke-width="1.4"/></svg>
<div class="r" style="left:635.50px;top:138.50px;width:1.00px;height:8.40px;background:#5a5a5a;"></div>
<svg width="8" height="8" viewBox="0 0 8 8" style="left:631.60px;top:146.20px;"><rect x="0.6" y="0.6" width="6.80" height="6.80" fill="none" stroke="#8a8a8a" stroke-width="1"/><path d="M2.00 4.0H6.00M4.0 2.00V6.00" stroke="#8a8a8a" stroke-width="1"/></svg>
<svg width="12.7" height="12.7" viewBox="0 0 12.7 12.7" style="left:643.60px;top:143.60px;"><rect x="0.40" y="0.40" width="11.90" height="11.90" rx="1.47" fill="#44e6a4" stroke="#0d3324" stroke-width="0.80"/><path d="M6.35 1.27L11.63 10.23L1.07 10.23Z" fill="#ffffff" stroke="#137048" stroke-width="0.60"/><path d="M4.14 6.28L8.56 6.28L6.35 9.76Z" fill="#ffffff" stroke="#111111" stroke-width="0.94"/></svg>
<div class="t" style="left:660.40px;top:143.13px;font-size:12.25px;line-height:12.25px;color:#cfcfcf;transform:scaleX(0.9697);">mtFractal</div>
<div class="r" style="left:719.30px;top:145.00px;width:9.00px;height:9.00px;background:#6a6a6a;border-radius:2px;"></div>
<svg width="9" height="9" viewBox="0 0 9 9" style="left:719.30px;top:145.00px;"><path d="M2.2 6.8L6.8 2.2" stroke="#2a2a2a" stroke-width="1.3"/></svg>
<div class="r" style="left:733.20px;top:143.50px;width:5.70px;height:5.70px;background:#5e5e5e;border-radius:3px;"></div>
<div class="r" style="left:733.20px;top:150.50px;width:5.70px;height:5.70px;background:#5e5e5e;border-radius:3px;"></div>
<svg width="13" height="10" viewBox="0 0 13 10" style="left:741.50px;top:144.50px;"><path d="M1.5 5L5 8.3L11.5 1.5" fill="none" stroke="#5fd58a" stroke-width="1.8"/></svg>
<svg width="7" height="7" viewBox="0 0 7 7" style="left:632.00px;top:248.70px;"><path d="M1.05 1.05L5.95 5.95M5.95 1.05L1.05 5.95" stroke="#bdbdbd" stroke-width="1.3"/></svg>
<div class="t" style="left:649.70px;top:248.73px;font-size:12.25px;line-height:12.25px;color:#d2d2d2;transform:scaleX(1.0223);">Attributes</div>
<svg width="13.5" height="9" viewBox="0 0 13.5 9" style="left:633.00px;top:273.00px;"><rect x="0" y="0.00" width="13.5" height="1.26" fill="#ececec"/><rect x="0" y="3.87" width="13.5" height="1.26" fill="#ececec"/><rect x="0" y="7.74" width="13.5" height="1.26" fill="#ececec"/></svg>
<div class="t" style="left:655.10px;top:271.63px;font-size:12.25px;line-height:12.25px;color:#bdbdbd;transform:scaleX(1.0149);">Mode</div>
<div class="t" style="left:699.60px;top:271.63px;font-size:12.25px;line-height:12.25px;color:#bdbdbd;transform:scaleX(0.9475);">Edit</div>
<div class="t" style="left:732.70px;top:271.63px;font-size:12.25px;line-height:12.25px;color:#bdbdbd;transform:scaleX(0.9502);">User Data</div>
<svg width="12.5" height="12.5" viewBox="0 0 12.5 12.5" style="left:897.25px;top:271.15px;"><path d="M11.88 6.25H1.25M5.62 1.88L1.25 6.25L5.62 10.62" fill="none" stroke="#a0a0a0" stroke-width="1.4"/></svg>
<svg width="12.5" height="12.5" viewBox="0 0 12.5 12.5" style="left:914.55px;top:271.15px;"><path d="M0.62 6.25H11.25M6.88 1.88L11.25 6.25L6.88 10.62" fill="none" stroke="#505050" stroke-width="1.4"/></svg>
<svg width="12.5" height="12.5" viewBox="0 0 12.5 12.5" style="left:931.75px;top:271.15px;"><path d="M6.25 11.88V1.25M1.88 5.62L6.25 1.25L10.62 5.62" fill="none" stroke="#a0a0a0" stroke-width="1.4"/></svg>
<svg width="12.5" height="12.5" viewBox="0 0 12.5 12.5" style="left:948.95px;top:271.15px;"><circle cx="5.25" cy="5.25" r="3.50" fill="none" stroke="#a0a0a0" stroke-width="1.4"/><path d="M7.75 7.75L11.50 11.50" stroke="#a0a0a0" stroke-width="1.68"/></svg>
<svg width="12.5" height="12.5" viewBox="0 0 12.5 12.5" style="left:966.25px;top:271.15px;"><path d="M0.62 2.50H11.88M2.75 6.25H9.75M5.00 10.00H7.50" stroke="#a0a0a0" stroke-width="1.68"/></svg>
<svg width="12.5" height="12.5" viewBox="0 0 12.5 12.5" style="left:984.15px;top:271.15px;"><rect x="1.88" y="5.62" width="8.75" height="6.25" rx="1" fill="#f0f0f0"/><path d="M3.75 6.00V4.00A2.50 2.50 0 0 1 8.75 4.00V6.00" fill="none" stroke="#f0f0f0" stroke-width="1.4"/></svg>
<svg width="12.5" height="12.5" viewBox="0 0 12.5 12.5" style="left:1001.75px;top:271.15px;"><circle cx="6.25" cy="6.25" r="5.25" fill="none" stroke="#a0a0a0" stroke-width="1.4"/><circle cx="6.25" cy="6.25" r="1.88" fill="#a0a0a0"/></svg>
<svg width="12.5" height="12.5" viewBox="0 0 12.5 12.5" style="left:1019.55px;top:271.15px;"><path d="M5.62 1.00H1.25V11.50H11.25V6.88M5.00 7.50L11.50 1.00M7.50 1.00H11.50V5.00" fill="none" stroke="#a0a0a0" stroke-width="1.4"/></svg>
<div class="r" style="left:628.00px;top:289.30px;width:406.50px;height:1.00px;background:#1f1f1f;"></div>
<svg width="16.2" height="16.2" viewBox="0 0 16.2 16.2" style="left:635.00px;top:295.90px;"><rect x="0.51" y="0.51" width="15.18" height="15.18" rx="1.88" fill="#44e6a4" stroke="#0d3324" stroke-width="1.02"/><path d="M8.10 1.62L14.84 13.05L1.36 13.05Z" fill="#ffffff" stroke="#137048" stroke-width="0.77"/><path d="M5.29 8.01L10.91 8.01L8.10 12.45Z" fill="#ffffff" stroke="#111111" stroke-width="1.19"/></svg>
<div class="t" style="left:656.80px;top:297.43px;font-size:12.25px;line-height:12.25px;color:#cfcfcf;transform:scaleX(0.9874);">mtFractal Object [mtFractal]</div>
<div class="r" style="left:926.40px;top:294.30px;width:101.60px;height:18.80px;background:#383838;border-radius:4.5px;"></div>
<div class="r" style="left:1010.50px;top:294.30px;width:1.00px;height:18.80px;background:#2a2a2a;"></div>
<div class="t" style="left:931.70px;top:298.13px;font-size:12.25px;line-height:12.25px;color:#bdbdbd;transform:scaleX(0.9809);">Custom</div>
<svg width="9" height="5" viewBox="0 0 9 5" style="left:1015.00px;top:301.50px;"><path d="M1 0.5H8L4.5 4.5Z" fill="#bbbbbb"/></svg>
<div class="r" style="left:635.50px;top:317.50px;width:49.40px;height:22.50px;background:#3a3a3a;border-radius:3.5px;"></div>
<div class="t" style="left:647.00px;top:323.13px;font-size:12.25px;line-height:12.25px;color:#c6c6c6;transform:scaleX(0.9113);">Basic</div>
<div class="r" style="left:689.00px;top:317.50px;width:87.60px;height:22.50px;background:#3a3a3a;border-radius:3.5px;"></div>
<div class="t" style="left:700.50px;top:323.13px;font-size:12.25px;line-height:12.25px;color:#c6c6c6;transform:scaleX(0.9780);">Coordinates</div>
<div class="r" style="left:780.70px;top:317.50px;width:58.30px;height:22.50px;background:#5e5e5e;border-radius:3.5px;"></div>
<div class="t" style="left:792.10px;top:323.13px;font-size:12.25px;line-height:12.25px;color:#f2f2f2;transform:scaleX(1.0027);">Object</div>
<div class="r" style="left:842.80px;top:317.50px;width:79.50px;height:22.50px;background:#3a3a3a;border-radius:3.5px;"></div>
<div class="t" style="left:853.90px;top:323.13px;font-size:12.25px;line-height:12.25px;color:#c6c6c6;transform:scaleX(0.9506);">X-Particles</div>
<div class="r" style="left:926.40px;top:317.50px;width:61.80px;height:22.50px;background:#3a3a3a;border-radius:3.5px;"></div>
<div class="t" style="left:937.40px;top:323.13px;font-size:12.25px;line-height:12.25px;color:#c6c6c6;transform:scaleX(0.9759);">Display</div>
<div class="r" style="left:640.00px;top:346.60px;width:380.00px;height:1.00px;background:#333333;"></div>
<svg width="10.5" height="10.5" viewBox="0 0 10.5 10.5" style="left:640.65px;top:354.05px;"><path d="M2 3.625L5.25 6.875L8.5 3.625" fill="none" stroke="#bdbdbd" stroke-width="1.2"/></svg>
<div class="t" style="left:654.80px;top:353.43px;font-size:12.25px;line-height:12.25px;color:#dedede;font-weight:700;transform:scaleX(0.8629);">TREE OPTIONS</div>
<svg width="11.8" height="11.8" viewBox="0 0 11.8 11.8" style="left:642.50px;top:380.20px;"><path d="M5.9 2.0000000000000004L9.8 5.9L5.9 9.8L2.0000000000000004 5.9Z" fill="none" stroke="#b0b0b0" stroke-width="1.35"/></svg>
<div class="t" style="left:661.90px;top:380.03px;font-size:12.25px;line-height:12.25px;color:#bdbdbd;transform:scaleX(0.9927);">Number Of Copies</div>
<div class="r" style="left:768.30px;top:376.50px;width:75.20px;height:19.20px;background:#1c1c1c;border-radius:3.5px;"></div>
<div class="t" style="left:802.20px;top:380.03px;font-size:12.25px;line-height:12.25px;color:#e4e4e4;transform:scaleX(0.6605);">1</div>
<div class="r" style="left:847.00px;top:384.35px;width:168.50px;height:3.50px;background:#1b1b1b;border-radius:1.75px;"></div>
<div class="r" style="left:846.80px;top:381.10px;width:4.00px;height:10.00px;background:#cfcfcf;border-radius:2.0px;"></div>
<svg width="11.8" height="11.8" viewBox="0 0 11.8 11.8" style="left:642.50px;top:404.00px;"><path d="M5.9 2.0000000000000004L9.8 5.9L5.9 9.8L2.0000000000000004 5.9Z" fill="none" stroke="#b0b0b0" stroke-width="1.35"/></svg>
<div class="t" style="left:661.90px;top:403.83px;font-size:12.25px;line-height:12.25px;color:#bdbdbd;transform:scaleX(0.9929);">Clone Angle</div>
<div class="r" style="left:768.30px;top:400.30px;width:75.20px;height:19.20px;background:#1c1c1c;border-radius:3.5px;"></div>
<div class="t" style="left:789.20px;top:403.83px;font-size:12.25px;line-height:12.25px;color:#e4e4e4;transform:scaleX(0.9299);">100 %</div>
<div class="r" style="left:847.00px;top:408.15px;width:168.50px;height:3.50px;background:#1b1b1b;border-radius:1.75px;"></div>
<div class="r" style="left:847.00px;top:408.15px;width:167.30px;height:3.50px;background:#8c8c8c;border-radius:1.75px;"></div>
<div class="r" style="left:1012.30px;top:404.90px;width:4.00px;height:10.00px;background:#cfcfcf;border-radius:2.0px;"></div>
<svg width="11.8" height="11.8" viewBox="0 0 11.8 11.8" style="left:642.50px;top:433.80px;"><path d="M5.9 2.0000000000000004L9.8 5.9L5.9 9.8L2.0000000000000004 5.9Z" fill="none" stroke="#b0b0b0" stroke-width="1.35"/></svg>
<div class="t" style="left:661.90px;top:433.63px;font-size:12.25px;line-height:12.25px;color:#bdbdbd;transform:scaleX(0.9066);">Steps</div>
<div class="r" style="left:768.30px;top:430.10px;width:75.20px;height:19.20px;background:#1c1c1c;border-radius:3.5px;"></div>
<div class="t" style="left:801.60px;top:433.63px;font-size:12.25px;line-height:12.25px;color:#e4e4e4;transform:scaleX(0.9394);">6</div>
<div class="r" style="left:847.00px;top:437.95px;width:168.50px;height:3.50px;background:#1b1b1b;border-radius:1.75px;"></div>
<div class="r" style="left:847.00px;top:437.95px;width:167.30px;height:3.50px;background:#5e5ea6;border-radius:1.75px;"></div>
<div class="r" style="left:1012.30px;top:434.70px;width:4.00px;height:10.00px;background:#cfcfcf;border-radius:2.0px;"></div>
<div class="r" style="left:1004.00px;top:437.95px;width:10.00px;height:3.50px;background:#e8913a;border-radius:1.5px;"></div>
<div class="r" style="left:1012.30px;top:434.70px;width:4.00px;height:10.00px;background:#cfcfcf;border-radius:2.0px;"></div>
<svg width="11.8" height="11.8" viewBox="0 0 11.8 11.8" style="left:642.50px;top:457.20px;"><path d="M5.9 2.0000000000000004L9.8 5.9L5.9 9.8L2.0000000000000004 5.9Z" fill="none" stroke="#b0b0b0" stroke-width="1.35"/></svg>
<div class="t" style="left:661.90px;top:457.03px;font-size:12.25px;line-height:12.25px;color:#bdbdbd;transform:scaleX(0.9255);">Branches</div>
<div class="r" style="left:768.30px;top:453.50px;width:75.20px;height:19.20px;background:#1c1c1c;border-radius:3.5px;"></div>
<div class="t" style="left:801.60px;top:457.03px;font-size:12.25px;line-height:12.25px;color:#e4e4e4;transform:scaleX(0.9394);">2</div>
<div class="r" style="left:847.00px;top:461.35px;width:168.50px;height:3.50px;background:#1b1b1b;border-radius:1.75px;"></div>
<div class="r" style="left:847.00px;top:461.35px;width:41.90px;height:3.50px;background:#8c8c8c;border-radius:1.75px;"></div>
<div class="r" style="left:886.90px;top:458.10px;width:4.00px;height:10.00px;background:#cfcfcf;border-radius:2.0px;"></div>
<svg width="11.8" height="11.8" viewBox="0 0 11.8 11.8" style="left:642.50px;top:480.60px;"><path d="M5.9 2.0000000000000004L9.8 5.9L5.9 9.8L2.0000000000000004 5.9Z" fill="none" stroke="#b0b0b0" stroke-width="1.35"/></svg>
<div class="t" style="left:661.90px;top:480.43px;font-size:12.25px;line-height:12.25px;color:#bdbdbd;transform:scaleX(0.9877);">Growth</div>
<div class="r" style="left:768.30px;top:476.90px;width:75.20px;height:19.20px;background:#1c1c1c;border-radius:3.5px;"></div>
<div class="t" style="left:789.20px;top:480.43px;font-size:12.25px;line-height:12.25px;color:#e4e4e4;transform:scaleX(0.9299);">100 %</div>
<div class="r" style="left:847.00px;top:484.75px;width:168.50px;height:3.50px;background:#1b1b1b;border-radius:1.75px;"></div>
<div class="r" style="left:847.00px;top:484.75px;width:167.30px;height:3.50px;background:#8c8c8c;border-radius:1.75px;"></div>
<div class="r" style="left:1012.30px;top:481.50px;width:4.00px;height:10.00px;background:#cfcfcf;border-radius:2.0px;"></div>
<svg width="11.8" height="11.8" viewBox="0 0 11.8 11.8" style="left:642.50px;top:504.70px;"><path d="M5.9 2.0000000000000004L9.8 5.9L5.9 9.8L2.0000000000000004 5.9Z" fill="none" stroke="#b0b0b0" stroke-width="1.35"/></svg>
<div class="t" style="left:661.90px;top:504.53px;font-size:12.25px;line-height:12.25px;color:#bdbdbd;transform:scaleX(0.9523);">Subsequent Scale</div>
<div class="r" style="left:768.30px;top:501.00px;width:75.20px;height:19.20px;background:#1c1c1c;border-radius:3.5px;"></div>
<div class="t" style="left:792.00px;top:504.53px;font-size:12.25px;line-height:12.25px;color:#e4e4e4;transform:scaleX(0.9563);">60 %</div>
<div class="r" style="left:847.00px;top:508.85px;width:168.50px;height:3.50px;background:#1b1b1b;border-radius:1.75px;"></div>
<div class="r" style="left:847.00px;top:508.85px;width:100.40px;height:3.50px;background:#8c8c8c;border-radius:1.75px;"></div>
<div class="r" style="left:945.40px;top:505.60px;width:4.00px;height:10.00px;background:#cfcfcf;border-radius:2.0px;"></div>
<svg width="11.8" height="11.8" viewBox="0 0 11.8 11.8" style="left:642.50px;top:534.50px;"><path d="M5.9 2.0000000000000004L9.8 5.9L5.9 9.8L2.0000000000000004 5.9Z" fill="none" stroke="#b0b0b0" stroke-width="1.35"/></svg>
<div class="t" style="left:661.90px;top:534.33px;font-size:12.25px;line-height:12.25px;color:#bdbdbd;transform:scaleX(0.9876);">Angle Open</div>
<div class="r" style="left:768.30px;top:530.80px;width:75.20px;height:19.20px;background:#1c1c1c;border-radius:3.5px;"></div>
<div class="t" style="left:793.80px;top:534.33px;font-size:12.25px;line-height:12.25px;color:#e4e4e4;transform:scaleX(1.0033);">45 °</div>
<div class="r" style="left:847.00px;top:538.65px;width:168.50px;height:3.50px;background:#1b1b1b;border-radius:1.75px;"></div>
<div class="r" style="left:847.00px;top:538.65px;width:41.90px;height:3.50px;background:#8c8c8c;border-radius:1.75px;"></div>
<div class="r" style="left:886.90px;top:535.40px;width:4.00px;height:10.00px;background:#cfcfcf;border-radius:2.0px;"></div>
<svg width="11.8" height="11.8" viewBox="0 0 11.8 11.8" style="left:642.50px;top:557.90px;"><path d="M5.9 2.0000000000000004L9.8 5.9L5.9 9.8L2.0000000000000004 5.9Z" fill="none" stroke="#b0b0b0" stroke-width="1.35"/></svg>
<div class="t" style="left:661.90px;top:557.73px;font-size:12.25px;line-height:12.25px;color:#bdbdbd;transform:scaleX(0.9703);">Angle Radial</div>
<div class="r" style="left:768.30px;top:554.20px;width:75.20px;height:19.20px;background:#1c1c1c;border-radius:3.5px;"></div>
<div class="t" style="left:789.20px;top:557.73px;font-size:12.25px;line-height:12.25px;color:#e4e4e4;transform:scaleX(0.9299);">100 %</div>
<div class="r" style="left:847.00px;top:562.05px;width:168.50px;height:3.50px;background:#1b1b1b;border-radius:1.75px;"></div>
<div class="r" style="left:847.00px;top:562.05px;width:167.30px;height:3.50px;background:#8c8c8c;border-radius:1.75px;"></div>
<div class="r" style="left:1012.30px;top:558.80px;width:4.00px;height:10.00px;background:#cfcfcf;border-radius:2.0px;"></div>
<svg width="11.8" height="11.8" viewBox="0 0 11.8 11.8" style="left:642.50px;top:581.70px;"><path d="M5.9 2.0000000000000004L9.8 5.9L5.9 9.8L2.0000000000000004 5.9Z" fill="none" stroke="#b0b0b0" stroke-width="1.35"/></svg>
<div class="t" style="left:661.90px;top:581.53px;font-size:12.25px;line-height:12.25px;color:#bdbdbd;transform:scaleX(0.9822);">Angle Spin</div>
<div class="r" style="left:768.30px;top:578.00px;width:75.20px;height:19.20px;background:#1c1c1c;border-radius:3.5px;"></div>
<div class="t" style="left:795.60px;top:581.53px;font-size:12.25px;line-height:12.25px;color:#e4e4e4;transform:scaleX(0.9238);">0 %</div>
<div class="r" style="left:847.00px;top:585.85px;width:168.50px;height:3.50px;background:#1b1b1b;border-radius:1.75px;"></div>
<div class="r" style="left:846.80px;top:582.60px;width:4.00px;height:10.00px;background:#cfcfcf;border-radius:2.0px;"></div>
<div class="r" style="left:640.00px;top:424.60px;width:380.00px;height:1.00px;background:#333333;"></div>
<div class="r" style="left:640.00px;top:524.00px;width:380.00px;height:1.00px;background:#333333;"></div>
<div class="r" style="left:640.00px;top:600.80px;width:380.00px;height:1.00px;background:#333333;"></div>
<div class="r" style="left:1021.10px;top:460.60px;width:3.00px;height:408.80px;background:#4a4a4a;border-radius:1.5px;"></div>
<div class="r" style="left:651.90px;top:606.40px;width:72.40px;height:19.60px;background:#3a3a3a;border-radius:10px;"></div>
<div class="t" style="left:661.70px;top:610.03px;font-size:12.25px;line-height:12.25px;color:#cfcfcf;transform:scaleX(0.9690);">Add Level</div>
<div class="t" style="left:661.70px;top:632.13px;font-size:12.25px;line-height:12.25px;color:#bdbdbd;transform:scaleX(0.9263);">Levels</div>
<svg width="7" height="9" viewBox="0 0 7 9" style="left:758.50px;top:633.70px;"><path d="M1.5 0.8L5.2 4.5L1.5 8.2" fill="none" stroke="#bdbdbd" stroke-width="1.2"/></svg>
<div class="r" style="left:766.8px;top:626.8px;width:232.8px;height:243.7px;border-bottom:none;box-sizing:border-box;border:1px solid #1f1f1f;background:#2a2a2a"></div>
<svg width="13" height="13" viewBox="0 0 13 13" style="left:1001.50px;top:628.80px;"><path d="M1.95 11.05L2.60 8.06L8.06 2.60M4.94 10.40L10.40 4.94M1.95 11.05L4.94 10.40M7.15 1.56L11.44 5.85M9.10 1.04L11.96 3.90" fill="none" stroke="#9a9a9a" stroke-width="1.3"/></svg>
<div class="r" style="left:16px;top:115px;width:1021px;height:758px;box-sizing:border-box;border:2.5px solid #ffffff;"></div>
</body></html>
